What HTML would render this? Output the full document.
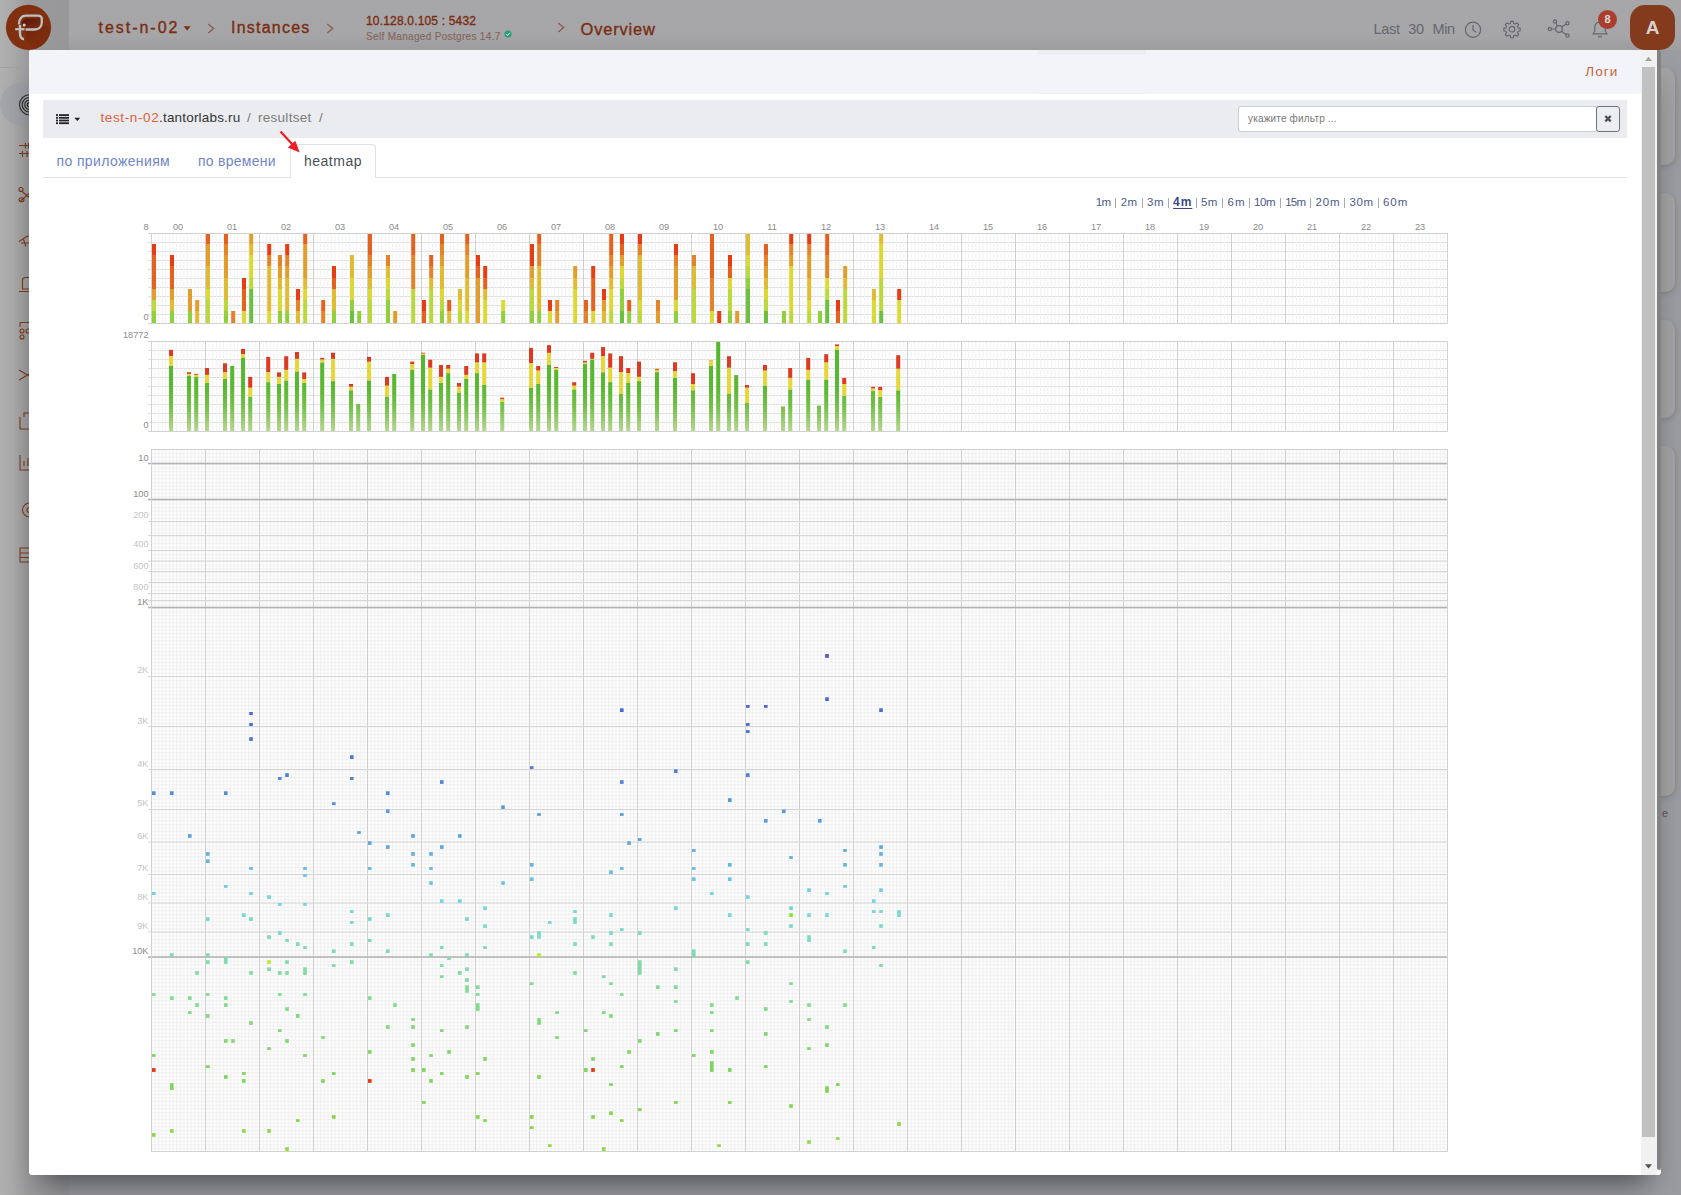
<!DOCTYPE html>
<html lang="ru"><head><meta charset="utf-8"><title>heatmap</title>
<style>
*{box-sizing:border-box;margin:0;padding:0}
html,body{width:1681px;height:1195px;overflow:hidden}
body{position:relative;background:#9b9ca1;font-family:"Liberation Sans",sans-serif;color:#333}
.abs{position:absolute}
#side{left:0;top:0;width:69px;height:1195px;background:linear-gradient(90deg,#b0b0b0 0,#ababab 10px,#9b9b9d 29px,#97979a 69px)}
#top{left:69px;top:0;width:1612px;height:50px;background:linear-gradient(#a7a7aa 0,#a6a6a9 70%,#9e9ea1 100%)}
#sideline{left:0;top:67px;width:69px;height:1px;background:#a0a0a4}
#pill{left:0;top:82px;width:72px;height:44px;border-radius:22px;background:linear-gradient(90deg,#a6a7ab 0,#9a9ba0 40%,#8c8d92 100%)}
.card{left:1600px;width:75px;border-radius:10px;background:#a3a3a3;box-shadow:1px 2px 5px rgba(0,0,0,.13)}
#logo{left:7px;top:5px;width:45px;height:45px;border-radius:50%;background:#84300f}
.bc{color:#7a2c10;white-space:nowrap;-webkit-text-stroke:.35px #7a2c10}
#t4{-webkit-text-stroke:.2px #86675d}
#avatar{left:1630px;top:5px;width:45px;height:45px;border-radius:15px;background:#843a1c;color:#d9cfcc;font-weight:bold;font-size:19px;text-align:center;line-height:45px;z-index:5}
#modal{left:29px;top:50px;width:1631.700px;height:1125px;background:#fff;border-radius:3px;box-shadow:0 20px 28px -12px rgba(0,0,0,.5)}
#mhead{left:0;top:0;width:1612px;height:44px;background:#f3f4f9;border-radius:3px 0 0 0}
#scroll{left:1612px;top:0;width:16px;height:1125px;background:#f1f1f1}
#thumb{left:1613px;top:17px;width:13px;height:1070px;background:#c1c1c1}
#sedge{left:1628px;top:0;width:3.700px;height:1120px;background:#828282;border-radius:0 3px 3px 3px}
#tool{left:14px;top:50px;width:1584px;height:37.500px;background:#ebecf0}
#tabs{left:14px;top:127px;width:1584px;height:1px;background:#dee2e6}
#tabact{left:261px;top:94px;width:86px;height:34px;border:1px solid #dee2e6;border-bottom:1px solid #fff;border-radius:4px 4px 0 0;background:#fff}
.tab{top:102.5px;font-size:14px;color:#6f86c9;white-space:nowrap}
#filter{left:1208.500px;top:56.400px;width:359px;height:25.400px;border:1px solid #c9ced4;border-radius:3px 0 0 3px;background:#fff;font-size:10px;color:#777;line-height:23px;padding-left:10px}
#fx{left:1567px;top:56.400px;width:24px;height:25.400px;border:1px solid #6c757d;border-radius:3px;background:#eceef1;text-align:center}
svg.charts{position:absolute;left:0;top:135px}
.crumb{top:59px;font-size:13.5px;line-height:18px;white-space:nowrap}
.iv{top:145px;font-size:11.5px;line-height:14px;color:#4b5a8c;white-space:nowrap}
.ivb{font-weight:bold;color:#3b4a86;font-size:12px;text-decoration:underline;text-decoration-thickness:1.300px;text-underline-offset:1.500px}
.ivs{top:147.500px;width:1px;height:10px;background:#aaa}
#filter{padding-left:9.500px}
#t1{letter-spacing:1.969px}
#t2{letter-spacing:1.225px}
#t3{letter-spacing:0.180px}
#t4{letter-spacing:0.324px}
#t5{letter-spacing:0.803px}
#t6{letter-spacing:-0.327px}
#t7{letter-spacing:1.088px}
#t8{letter-spacing:0.172px}
#c1{letter-spacing:0.621px}
#c2{letter-spacing:0.188px}
#c3{letter-spacing:0.278px}
#tb1{letter-spacing:0.379px}
#tb2{letter-spacing:0.252px}
#tb3{letter-spacing:0.501px}
#iv0{letter-spacing:-0.778px}
#iv1{letter-spacing:0.516px}
#iv2{letter-spacing:0.516px}
#iv3{letter-spacing:0.954px}
#iv4{letter-spacing:0.516px}
#iv5{letter-spacing:1.222px}
#iv6{letter-spacing:-0.341px}
#iv7{letter-spacing:-0.787px}
#iv8{letter-spacing:0.812px}
#iv9{letter-spacing:0.713px}
#iv10{letter-spacing:1.007px}

</style></head><body>
<div id="side" class="abs"></div>
<div id="top" class="abs"></div>
<div id="sideline" class="abs"></div>
<div id="pill" class="abs"></div>
<div class="abs card" style="top:68px;height:97px"></div>
<div class="abs card" style="top:193px;height:99px"></div>
<div class="abs card" style="top:320px;height:98px"></div>
<div class="abs card" style="top:446px;height:350px"></div>

<svg class="abs" style="left:14px;top:90px" width="40" height="480" viewBox="14 90 40 480">
 <g fill="none" stroke="#2a2a2a" stroke-width="1.100"><circle cx="29.500" cy="104.800" r="10"/><circle cx="29.500" cy="104.800" r="7.300"/><circle cx="29.500" cy="104.800" r="4.700"/><circle cx="29.500" cy="104.800" r="2.200"/></g>
 <g fill="none" stroke="#7a3a1c" stroke-width="1.100">
  <path d="M19 145.500H38M19 153.500H38M25.500 143V148.500M28.500 143V148.500M22.500 151V157M27 151V157"/>
  <path d="M21.500 191L36 203M20.500 201L36 187.500"/><circle cx="21" cy="189.500" r="2"/><ellipse cx="21.500" cy="199.800" rx="2.500" ry="2"/>
  <path d="M19 241.500L27.500 236L36 238M23.500 239.500L26 246.500M21 243H29"/>
  <path d="M19 291.500H38M22.500 289V280.500C22.500 278.500 23.500 277.500 25.500 277.500H32C34 277.500 35 278.500 35 280.500V289Z"/>
  <path d="M20 322.500H32M20 322.500V327"/><circle cx="22" cy="331" r="2"/><circle cx="22" cy="337" r="2"/><circle cx="28" cy="331" r="2"/>
  <path d="M19 370L36 380M19 380L36 370"/>
  <path d="M20 417V429H32M24 417V413H36"/>
  <path d="M20 455V470H38M24 466V461M28 466V458"/>
  <circle cx="29.500" cy="510" r="7"/><circle cx="29.500" cy="510" r="2.500"/>
  <path d="M20 548H38V562H20ZM20 553H38M20 557.500H38"/>
 </g>
</svg>


<svg class="abs" style="left:5px;top:4px" width="48" height="48" viewBox="0 0 48 48">
 <defs><linearGradient id="lg1" x1="0" y1="0" x2="1" y2="1"><stop offset="0" stop-color="#56140a"/><stop offset="1" stop-color="#7c2c0e"/></linearGradient>
 <linearGradient id="lg2" x1="0" y1="0" x2="1" y2="1"><stop offset="0" stop-color="#6e2208"/><stop offset="1" stop-color="#80300e"/></linearGradient></defs>
 <circle cx="23.500" cy="23.400" r="22.600" fill="#80300e"/>
 <path d="M20.600 26 L20.600 36 L30 45 C38 42 44 35 45.500 27 L36 16 Z" fill="url(#lg2)" opacity=".7"/>
 <path d="M17.300 21 C17 16.500 19.500 14.600 23 14.600 L34 14.400 C35.200 14.400 35.400 15.500 35.300 17 L35 19.500 C34.500 22.500 32 24 28.500 24 L20.600 24 L20.600 22 C20.600 20 18.500 19.500 17.300 21 Z" fill="url(#lg1)"/>
 <path d="M13.900 20.500 C13.900 14 17 11.700 21 11.700 L33 11.700 C35.800 11.700 36.800 12.900 36.800 15.200 L36.800 18.500 C36.800 23.300 33.200 25.500 29 25.500 L20.600 25.500" fill="none" stroke="#bcc0c4" stroke-width="2.300"/>
 <path d="M15 21 L15 29.500 C15 33 16.800 34.900 19 35.200" fill="none" stroke="#bcc0c4" stroke-width="2.500"/>
 <path d="M10.200 25.200 L19.500 25.200" fill="none" stroke="#bcc0c4" stroke-width="2.200"/>
 <circle cx="19.200" cy="20.900" r="1.500" fill="#c8cbce"/>
</svg>
<div id="t1" class="abs bc" style="left:98.5px;top:18px;font-size:16px;line-height:20px">test-n-02</div>
<svg class="abs" style="left:183px;top:25px" width="9" height="7" viewBox="0 0 9 7"><path d="M0.6 1.2 L7.6 1.2 L4.1 5.6 Z" fill="#7b3014"/></svg>
<svg class="abs" style="left:206px;top:22px" width="10" height="13" viewBox="0 0 10 13"><path d="M2.3 2 L7.6 6.5 L2.3 11" fill="none" stroke="#8c5e50" stroke-width="1.4"/></svg>
<div id="t2" class="abs bc" style="left:231px;top:18px;font-size:16px;line-height:20px">Instances</div>
<svg class="abs" style="left:325px;top:22px" width="10" height="13" viewBox="0 0 10 13"><path d="M2.3 2 L7.6 6.5 L2.3 11" fill="none" stroke="#8c5e50" stroke-width="1.4"/></svg>
<div id="t3" class="abs bc" style="left:366px;top:14px;font-size:12px;line-height:14px">10.128.0.105 : 5432</div>
<div id="t4" class="abs bc" style="left:366px;top:31px;font-size:10px;line-height:12px;color:#86675d">Self Managed Postgres 14.7</div>
<svg class="abs" style="left:504px;top:29.5px" width="8" height="8" viewBox="0 0 8 8"><circle cx="4" cy="4" r="3.6" fill="#2f9a78"/><path d="M2.2 4.1 L3.5 5.4 L5.9 2.8" fill="none" stroke="#cfe" stroke-width="1"/></svg>
<svg class="abs" style="left:556px;top:21px" width="10" height="13" viewBox="0 0 10 13"><path d="M2.3 2 L7.6 6.5 L2.3 11" fill="none" stroke="#8c5e50" stroke-width="1.4"/></svg>
<div id="t5" class="abs bc" style="left:580.5px;top:19px;font-size:16.5px;line-height:20px">Overview</div>
<div id="t6" class="abs" style="left:1373.5px;top:20px;font-size:14.5px;line-height:18px;color:#66676d;white-space:nowrap;word-spacing:5px">Last 30 Min</div>
<svg class="abs" style="left:1463px;top:20px" width="20" height="20" viewBox="0 0 20 20"><circle cx="10" cy="9.7" r="7.6" fill="none" stroke="#66676d" stroke-width="1.2"/><path d="M10 5 L10 10 L13 12.2" fill="none" stroke="#66676d" stroke-width="1.2"/></svg>
<svg class="abs" style="left:1502px;top:19px" width="20" height="20" viewBox="0 0 20 20"><path d="M8.6 1.6h2.8l.5 2.3 1.7.7 2-1.3 2 2-1.3 2 .7 1.7 2.3.5v2.8l-2.3.5-.7 1.7 1.3 2-2 2-2-1.3-1.7.7-.5 2.3H8.600l-.5-2.3-1.700-.7-2 1.3-2-2 1.300-2-.7-1.700-2.300-.5V9.500l2.300-.5.700-1.700-1.300-2 2-2 2 1.300 1.700-.7z" transform="translate(1.2 1) scale(.88)" fill="none" stroke="#66676d" stroke-width="1.3" stroke-linejoin="round"/><circle cx="10" cy="10.2" r="2.8" fill="none" stroke="#66676d" stroke-width="1.2"/></svg>
<svg class="abs" style="left:1546px;top:18px" width="26" height="22" viewBox="0 0 26 22"><g fill="none" stroke="#66676d" stroke-width="1.2"><circle cx="13" cy="11" r="3.3"/><circle cx="3.8" cy="11" r="1.6"/><circle cx="9" cy="3.400" r="1.600"/><circle cx="21.500" cy="5.200" r="1.600"/><circle cx="21.500" cy="17.500" r="1.600"/><path d="M5.400 11H9.700M9.800 4.800l1.700 3.200M15.600 9l4.600-3M15.400 13.300l4.800 3.300"/></g></svg>
<svg class="abs" style="left:1590px;top:20px" width="20" height="20" viewBox="0 0 20 20"><path d="M10 2.200c-3.200 0-5.200 2.300-5.200 5.400v3.600l-1.700 2.700h13.800l-1.700-2.700V7.600c0-3.100-2-5.400-5.200-5.400z" fill="none" stroke="#66676d" stroke-width="1.200"/><path d="M8.300 15.700a1.800 1.800 0 0 0 3.400 0" fill="none" stroke="#66676d" stroke-width="1.200"/></svg>
<div class="abs" style="left:1598px;top:10px;width:19px;height:19px;border-radius:50%;background:#a93e2e;color:#ddd;font-size:11px;font-weight:bold;line-height:19px;text-align:center">8</div>

<div class="abs" style="left:1662px;top:807px;font-size:11px;color:#6e5550">e</div>
<div id="avatar" class="abs">A</div>
<div id="modal" class="abs">
 <div id="mhead" class="abs"></div>
 <div id="scroll" class="abs"></div><div id="thumb" class="abs"></div><div id="sedge" class="abs"></div>
 <svg class="abs" style="left:1612px;top:0" width="16" height="17" viewBox="0 0 16 17"><path d="M4 10.900 L11 10.900 L7.500 6.700 Z" fill="#a3a3a3"/></svg>
 <svg class="abs" style="left:1612px;top:1108px" width="16" height="17" viewBox="0 0 16 17"><path d="M4 6.200 L11 6.200 L7.500 10.400 Z" fill="#505050"/></svg>
 <div class="abs" style="left:1009px;top:0;width:108px;height:5px;background:#eceef3"></div>
 <div class="abs" style="left:1009px;top:42.500px;width:108px;height:1.500px;background:#eceef3"></div>
 <div id="t7" class="abs" style="left:1556.300px;top:13.800px;font-size:13.5px;line-height:16px;color:#c4663c;white-space:nowrap">Логи</div>
 <div id="tool" class="abs"></div>
 <div id="filter" class="abs"><span id="t8">укажите фильтр ...</span></div>
 <div id="fx" class="abs"><svg width="22" height="23" viewBox="0 0 22 23"><path d="M8.300 9 L13.700 14.400 M13.700 9 L8.300 14.400" stroke="#495057" stroke-width="2.200"/></svg></div>
 <svg class="abs" style="left:26px;top:63px" width="28" height="12" viewBox="0 0 28 12"><g fill="#212529"><rect x="1" y="1.200" width="2" height="1.800"/><rect x="4" y="1.200" width="10" height="1.800"/><rect x="1" y="3.900" width="2" height="1.800"/><rect x="4" y="3.900" width="10" height="1.800"/><rect x="1" y="6.600" width="2" height="1.800"/><rect x="4" y="6.600" width="10" height="1.800"/><rect x="1" y="9.300" width="2" height="1.800"/><rect x="4" y="9.300" width="10" height="1.800"/><path d="M19.300 4.800 L25.300 4.800 L22.300 8 Z"/></g></svg>
 <div id="c1" class="abs crumb" style="left:71.500px;color:#e0603a">test-n-02</div>
 <div id="c2" class="abs crumb" style="left:130px;color:#343434">.tantorlabs.ru</div>
 <div class="abs crumb" style="left:218px;color:#7b7b7b">/</div>
 <div id="c3" class="abs crumb" style="left:229px;color:#7b7b7b">resultset</div>
 <div class="abs crumb" style="left:290px;color:#7b7b7b">/</div>
 <svg class="abs" style="left:248px;top:78px;z-index:3" width="26" height="28" viewBox="0 0 26 28"><path d="M3.500 3.500 L16 17" stroke="#ee1c24" stroke-width="2.200" fill="none"/><path d="M22.700 24.500 L10.800 19.500 L18.300 12.700 Z" fill="#ee1c24"/></svg>
 <div id="tabs" class="abs"></div>
 <div id="tabact" class="abs"></div>
 <div id="tb1" class="abs tab" style="left:27.500px">по приложениям</div>
 <div id="tb2" class="abs tab" style="left:169px">по времени</div>
 <div id="tb3" class="abs tab" style="left:275px;color:#495057">heatmap</div>
 <div id="iv0" class="abs iv" style="left:1066.8px">1m</div>
 <div id="iv1" class="abs iv" style="left:1091.7px">2m</div>
 <div id="iv2" class="abs iv" style="left:1118.1px">3m</div>
 <div id="iv3" class="abs iv ivb" style="left:1144.1px">4m</div>
 <div id="iv4" class="abs iv" style="left:1171.9px">5m</div>
 <div id="iv5" class="abs iv" style="left:1198.4px">6m</div>
 <div id="iv6" class="abs iv" style="left:1225.0px">10m</div>
 <div id="iv7" class="abs iv" style="left:1256.2px">15m</div>
 <div id="iv8" class="abs iv" style="left:1286.5px">20m</div>
 <div id="iv9" class="abs iv" style="left:1320.4px">30m</div>
 <div id="iv10" class="abs iv" style="left:1353.9px">60m</div>
 <div class="abs ivs" style="left:1086.0px"></div>
 <div class="abs ivs" style="left:1112.7px"></div>
 <div class="abs ivs" style="left:1139.1px"></div>
 <div class="abs ivs" style="left:1166.9px"></div>
 <div class="abs ivs" style="left:1192.9px"></div>
 <div class="abs ivs" style="left:1220.0px"></div>
 <div class="abs ivs" style="left:1251.2px"></div>
 <div class="abs ivs" style="left:1281.1px"></div>
 <div class="abs ivs" style="left:1315.0px"></div>
 <div class="abs ivs" style="left:1348.9px"></div>
<svg class="charts" width="1612" height="990" viewBox="29 185 1612 990">
<defs>
<pattern id="vg" x="151" y="0" width="3.6" height="10" patternUnits="userSpaceOnUse"><rect x="0" y="0" width="1" height="10" fill="#f1f1f1"/></pattern>
<pattern id="hg" x="151" y="449.5" width="3.6" height="3.6" patternUnits="userSpaceOnUse"><rect x="0" y="0" width="3.6" height="3.6" fill="#fdfdfd"/><rect x="0" y="0" width="1" height="3.6" fill="#f0f0f0"/><rect x="0" y="0" width="3.6" height="1" fill="#f0f0f0"/></pattern>
<linearGradient id="gg" gradientUnits="userSpaceOnUse" x1="0" y1="341.5" x2="0" y2="431.5"><stop offset="0" stop-color="#54b82c"/><stop offset="0.5" stop-color="#58b92e"/><stop offset="0.72" stop-color="#74c048"/><stop offset="1" stop-color="#b8d692"/></linearGradient>
</defs>
<rect x="151.5" y="233.5" width="1296" height="90" fill="#fff"/>
<rect x="148" y="242" width="1299.5" height="1" fill="#dedede"/>
<rect x="148" y="251" width="1299.5" height="1" fill="#dedede"/>
<rect x="148" y="260" width="1299.5" height="1" fill="#dedede"/>
<rect x="148" y="269" width="1299.5" height="1" fill="#dedede"/>
<rect x="148" y="278" width="1299.5" height="1" fill="#dedede"/>
<rect x="148" y="287" width="1299.5" height="1" fill="#dedede"/>
<rect x="148" y="296" width="1299.5" height="1" fill="#dedede"/>
<rect x="148" y="305" width="1299.5" height="1" fill="#dedede"/>
<rect x="148" y="314" width="1299.5" height="1" fill="#dedede"/>
<rect x="151.5" y="233.5" width="1296" height="90" fill="url(#vg)"/>
<rect x="205" y="233.5" width="1" height="90" fill="#cfcfcf"/>
<rect x="259" y="233.5" width="1" height="90" fill="#cfcfcf"/>
<rect x="313" y="233.5" width="1" height="90" fill="#cfcfcf"/>
<rect x="367" y="233.5" width="1" height="90" fill="#cfcfcf"/>
<rect x="421" y="233.5" width="1" height="90" fill="#cfcfcf"/>
<rect x="475" y="233.5" width="1" height="90" fill="#cfcfcf"/>
<rect x="529" y="233.5" width="1" height="90" fill="#cfcfcf"/>
<rect x="583" y="233.5" width="1" height="90" fill="#cfcfcf"/>
<rect x="637" y="233.5" width="1" height="90" fill="#cfcfcf"/>
<rect x="691" y="233.5" width="1" height="90" fill="#cfcfcf"/>
<rect x="745" y="233.5" width="1" height="90" fill="#cfcfcf"/>
<rect x="799" y="233.5" width="1" height="90" fill="#cfcfcf"/>
<rect x="853" y="233.5" width="1" height="90" fill="#cfcfcf"/>
<rect x="907" y="233.5" width="1" height="90" fill="#cfcfcf"/>
<rect x="961" y="233.5" width="1" height="90" fill="#cfcfcf"/>
<rect x="1015" y="233.5" width="1" height="90" fill="#cfcfcf"/>
<rect x="1069" y="233.5" width="1" height="90" fill="#cfcfcf"/>
<rect x="1123" y="233.5" width="1" height="90" fill="#cfcfcf"/>
<rect x="1177" y="233.5" width="1" height="90" fill="#cfcfcf"/>
<rect x="1231" y="233.5" width="1" height="90" fill="#cfcfcf"/>
<rect x="1285" y="233.5" width="1" height="90" fill="#cfcfcf"/>
<rect x="1339" y="233.5" width="1" height="90" fill="#cfcfcf"/>
<rect x="1393" y="233.5" width="1" height="90" fill="#cfcfcf"/>
<rect x="152" y="311" width="4" height="12" fill="#92cf3c"/>
<rect x="152" y="300" width="4" height="11" fill="#bbd93a"/>
<rect x="152" y="289" width="4" height="11" fill="#e29e2d"/>
<rect x="152" y="278" width="4" height="11" fill="#e5621e"/>
<rect x="152" y="266" width="4" height="12" fill="#e5621e"/>
<rect x="152" y="255" width="4" height="11" fill="#e5621e"/>
<rect x="152" y="244" width="4" height="11" fill="#e83c15"/>
<rect x="170" y="311" width="4" height="12" fill="#92cf3c"/>
<rect x="170" y="300" width="4" height="11" fill="#e0bc33"/>
<rect x="170" y="289" width="4" height="11" fill="#e29e2d"/>
<rect x="170" y="278" width="4" height="11" fill="#e5621e"/>
<rect x="170" y="266" width="4" height="12" fill="#e5621e"/>
<rect x="170" y="255" width="4" height="11" fill="#e83c15"/>
<rect x="188" y="311" width="4" height="12" fill="#92cf3c"/>
<rect x="188" y="300" width="4" height="11" fill="#e29e2d"/>
<rect x="188" y="289" width="4" height="11" fill="#e29e2d"/>
<rect x="195.2" y="311" width="4" height="12" fill="#e0bc33"/>
<rect x="195.2" y="300" width="4" height="11" fill="#e29e2d"/>
<rect x="206" y="311" width="4" height="12" fill="#bbd93a"/>
<rect x="206" y="300" width="4" height="11" fill="#bbd93a"/>
<rect x="206" y="289" width="4" height="11" fill="#dcd937"/>
<rect x="206" y="278" width="4" height="11" fill="#e0bc33"/>
<rect x="206" y="266" width="4" height="12" fill="#e0bc33"/>
<rect x="206" y="255" width="4" height="11" fill="#e29e2d"/>
<rect x="206" y="244" width="4" height="11" fill="#e29e2d"/>
<rect x="206" y="233" width="4" height="11" fill="#e5621e"/>
<rect x="224" y="311" width="4" height="12" fill="#92cf3c"/>
<rect x="224" y="300" width="4" height="11" fill="#bbd93a"/>
<rect x="224" y="289" width="4" height="11" fill="#e0bc33"/>
<rect x="224" y="278" width="4" height="11" fill="#e0bc33"/>
<rect x="224" y="266" width="4" height="12" fill="#e29e2d"/>
<rect x="224" y="255" width="4" height="11" fill="#e29e2d"/>
<rect x="224" y="244" width="4" height="11" fill="#e4832a"/>
<rect x="224" y="233" width="4" height="11" fill="#e5621e"/>
<rect x="231.2" y="311" width="4" height="12" fill="#e4832a"/>
<rect x="242" y="311" width="4" height="12" fill="#dcd937"/>
<rect x="242" y="300" width="4" height="11" fill="#e5621e"/>
<rect x="242" y="289" width="4" height="11" fill="#e5621e"/>
<rect x="242" y="278" width="4" height="11" fill="#e83c15"/>
<rect x="249.2" y="311" width="4" height="12" fill="#6cc040"/>
<rect x="249.2" y="300" width="4" height="11" fill="#6cc040"/>
<rect x="249.2" y="289" width="4" height="11" fill="#6cc040"/>
<rect x="249.2" y="278" width="4" height="11" fill="#bbd93a"/>
<rect x="249.2" y="266" width="4" height="12" fill="#dcd937"/>
<rect x="249.2" y="255" width="4" height="11" fill="#dcd937"/>
<rect x="249.2" y="244" width="4" height="11" fill="#e0bc33"/>
<rect x="249.2" y="233" width="4" height="11" fill="#e29e2d"/>
<rect x="267.2" y="311" width="4" height="12" fill="#dcd937"/>
<rect x="267.2" y="300" width="4" height="11" fill="#e0bc33"/>
<rect x="267.2" y="289" width="4" height="11" fill="#e0bc33"/>
<rect x="267.2" y="278" width="4" height="11" fill="#e0bc33"/>
<rect x="267.2" y="266" width="4" height="12" fill="#e0bc33"/>
<rect x="267.2" y="255" width="4" height="11" fill="#e4832a"/>
<rect x="267.2" y="244" width="4" height="11" fill="#e83c15"/>
<rect x="278" y="311" width="4" height="12" fill="#92cf3c"/>
<rect x="278" y="300" width="4" height="11" fill="#dcd937"/>
<rect x="278" y="289" width="4" height="11" fill="#dcd937"/>
<rect x="278" y="278" width="4" height="11" fill="#e0bc33"/>
<rect x="278" y="266" width="4" height="12" fill="#e29e2d"/>
<rect x="278" y="255" width="4" height="11" fill="#e4832a"/>
<rect x="285.2" y="311" width="4" height="12" fill="#92cf3c"/>
<rect x="285.2" y="300" width="4" height="11" fill="#e0bc33"/>
<rect x="285.2" y="289" width="4" height="11" fill="#e0bc33"/>
<rect x="285.2" y="278" width="4" height="11" fill="#e0bc33"/>
<rect x="285.2" y="266" width="4" height="12" fill="#e29e2d"/>
<rect x="285.2" y="255" width="4" height="11" fill="#e4832a"/>
<rect x="285.2" y="244" width="4" height="11" fill="#e83c15"/>
<rect x="296" y="311" width="4" height="12" fill="#e0bc33"/>
<rect x="296" y="300" width="4" height="11" fill="#e4832a"/>
<rect x="296" y="289" width="4" height="11" fill="#e83c15"/>
<rect x="303.2" y="311" width="4" height="12" fill="#bbd93a"/>
<rect x="303.2" y="300" width="4" height="11" fill="#bbd93a"/>
<rect x="303.2" y="289" width="4" height="11" fill="#dcd937"/>
<rect x="303.2" y="278" width="4" height="11" fill="#e0bc33"/>
<rect x="303.2" y="266" width="4" height="12" fill="#e29e2d"/>
<rect x="303.2" y="255" width="4" height="11" fill="#e29e2d"/>
<rect x="303.2" y="244" width="4" height="11" fill="#e29e2d"/>
<rect x="303.2" y="233" width="4" height="11" fill="#e5621e"/>
<rect x="321.2" y="311" width="4" height="12" fill="#e4832a"/>
<rect x="321.2" y="300" width="4" height="11" fill="#e5621e"/>
<rect x="332" y="311" width="4" height="12" fill="#92cf3c"/>
<rect x="332" y="300" width="4" height="11" fill="#e0bc33"/>
<rect x="332" y="289" width="4" height="11" fill="#e0bc33"/>
<rect x="332" y="278" width="4" height="11" fill="#e5621e"/>
<rect x="332" y="266" width="4" height="12" fill="#e83c15"/>
<rect x="350" y="311" width="4" height="12" fill="#6cc040"/>
<rect x="350" y="300" width="4" height="11" fill="#92cf3c"/>
<rect x="350" y="289" width="4" height="11" fill="#dcd937"/>
<rect x="350" y="278" width="4" height="11" fill="#dcd937"/>
<rect x="350" y="266" width="4" height="12" fill="#e0bc33"/>
<rect x="350" y="255" width="4" height="11" fill="#e0bc33"/>
<rect x="357.2" y="311" width="4" height="12" fill="#92cf3c"/>
<rect x="368" y="311" width="4" height="12" fill="#bbd93a"/>
<rect x="368" y="300" width="4" height="11" fill="#bbd93a"/>
<rect x="368" y="289" width="4" height="11" fill="#dcd937"/>
<rect x="368" y="278" width="4" height="11" fill="#e0bc33"/>
<rect x="368" y="266" width="4" height="12" fill="#e29e2d"/>
<rect x="368" y="255" width="4" height="11" fill="#e4832a"/>
<rect x="368" y="244" width="4" height="11" fill="#e5621e"/>
<rect x="368" y="233" width="4" height="11" fill="#e5621e"/>
<rect x="386" y="311" width="4" height="12" fill="#92cf3c"/>
<rect x="386" y="300" width="4" height="11" fill="#92cf3c"/>
<rect x="386" y="289" width="4" height="11" fill="#bbd93a"/>
<rect x="386" y="278" width="4" height="11" fill="#dcd937"/>
<rect x="386" y="266" width="4" height="12" fill="#e0bc33"/>
<rect x="386" y="255" width="4" height="11" fill="#e4832a"/>
<rect x="393.2" y="311" width="4" height="12" fill="#e29e2d"/>
<rect x="411.2" y="311" width="4" height="12" fill="#bbd93a"/>
<rect x="411.2" y="300" width="4" height="11" fill="#bbd93a"/>
<rect x="411.2" y="289" width="4" height="11" fill="#bbd93a"/>
<rect x="411.2" y="278" width="4" height="11" fill="#e4832a"/>
<rect x="411.2" y="266" width="4" height="12" fill="#e4832a"/>
<rect x="411.2" y="255" width="4" height="11" fill="#e4832a"/>
<rect x="411.2" y="244" width="4" height="11" fill="#e5621e"/>
<rect x="411.2" y="233" width="4" height="11" fill="#e5621e"/>
<rect x="422" y="311" width="4" height="12" fill="#e5621e"/>
<rect x="422" y="300" width="4" height="11" fill="#e83c15"/>
<rect x="429.2" y="311" width="4" height="12" fill="#bbd93a"/>
<rect x="429.2" y="300" width="4" height="11" fill="#bbd93a"/>
<rect x="429.2" y="289" width="4" height="11" fill="#bbd93a"/>
<rect x="429.2" y="278" width="4" height="11" fill="#e0bc33"/>
<rect x="429.2" y="266" width="4" height="12" fill="#e4832a"/>
<rect x="429.2" y="255" width="4" height="11" fill="#e5621e"/>
<rect x="440" y="311" width="4" height="12" fill="#92cf3c"/>
<rect x="440" y="300" width="4" height="11" fill="#bbd93a"/>
<rect x="440" y="289" width="4" height="11" fill="#dcd937"/>
<rect x="440" y="278" width="4" height="11" fill="#e0bc33"/>
<rect x="440" y="266" width="4" height="12" fill="#e0bc33"/>
<rect x="440" y="255" width="4" height="11" fill="#e29e2d"/>
<rect x="440" y="244" width="4" height="11" fill="#e4832a"/>
<rect x="440" y="233" width="4" height="11" fill="#e5621e"/>
<rect x="447.2" y="311" width="4" height="12" fill="#e0bc33"/>
<rect x="447.2" y="300" width="4" height="11" fill="#e5621e"/>
<rect x="458" y="311" width="4" height="12" fill="#bbd93a"/>
<rect x="458" y="300" width="4" height="11" fill="#dcd937"/>
<rect x="458" y="289" width="4" height="11" fill="#e0bc33"/>
<rect x="465.2" y="311" width="4" height="12" fill="#dcd937"/>
<rect x="465.2" y="300" width="4" height="11" fill="#e0bc33"/>
<rect x="465.2" y="289" width="4" height="11" fill="#e0bc33"/>
<rect x="465.2" y="278" width="4" height="11" fill="#e0bc33"/>
<rect x="465.2" y="266" width="4" height="12" fill="#e29e2d"/>
<rect x="465.2" y="255" width="4" height="11" fill="#e29e2d"/>
<rect x="465.2" y="244" width="4" height="11" fill="#e4832a"/>
<rect x="465.2" y="233" width="4" height="11" fill="#e5621e"/>
<rect x="476" y="311" width="4" height="12" fill="#e29e2d"/>
<rect x="476" y="300" width="4" height="11" fill="#e29e2d"/>
<rect x="476" y="289" width="4" height="11" fill="#e29e2d"/>
<rect x="476" y="278" width="4" height="11" fill="#e29e2d"/>
<rect x="476" y="266" width="4" height="12" fill="#e5621e"/>
<rect x="476" y="255" width="4" height="11" fill="#e83c15"/>
<rect x="483.2" y="311" width="4" height="12" fill="#dcd937"/>
<rect x="483.2" y="300" width="4" height="11" fill="#dcd937"/>
<rect x="483.2" y="289" width="4" height="11" fill="#e0bc33"/>
<rect x="483.2" y="278" width="4" height="11" fill="#e5621e"/>
<rect x="483.2" y="266" width="4" height="12" fill="#e83c15"/>
<rect x="501.2" y="311" width="4" height="12" fill="#92cf3c"/>
<rect x="501.2" y="300" width="4" height="11" fill="#dcd937"/>
<rect x="530" y="311" width="4" height="12" fill="#92cf3c"/>
<rect x="530" y="300" width="4" height="11" fill="#bbd93a"/>
<rect x="530" y="289" width="4" height="11" fill="#bbd93a"/>
<rect x="530" y="278" width="4" height="11" fill="#e0bc33"/>
<rect x="530" y="266" width="4" height="12" fill="#e29e2d"/>
<rect x="530" y="255" width="4" height="11" fill="#e83c15"/>
<rect x="530" y="244" width="4" height="11" fill="#e83c15"/>
<rect x="537.2" y="311" width="4" height="12" fill="#92cf3c"/>
<rect x="537.2" y="300" width="4" height="11" fill="#e0bc33"/>
<rect x="537.2" y="289" width="4" height="11" fill="#e0bc33"/>
<rect x="537.2" y="278" width="4" height="11" fill="#e0bc33"/>
<rect x="537.2" y="266" width="4" height="12" fill="#e0bc33"/>
<rect x="537.2" y="255" width="4" height="11" fill="#e4832a"/>
<rect x="537.2" y="244" width="4" height="11" fill="#e4832a"/>
<rect x="537.2" y="233" width="4" height="11" fill="#e5621e"/>
<rect x="548" y="311" width="4" height="12" fill="#dcd937"/>
<rect x="548" y="300" width="4" height="11" fill="#e83c15"/>
<rect x="555.2" y="311" width="4" height="12" fill="#e29e2d"/>
<rect x="555.2" y="300" width="4" height="11" fill="#e4832a"/>
<rect x="573.2" y="311" width="4" height="12" fill="#dcd937"/>
<rect x="573.2" y="300" width="4" height="11" fill="#dcd937"/>
<rect x="573.2" y="289" width="4" height="11" fill="#dcd937"/>
<rect x="573.2" y="278" width="4" height="11" fill="#e0bc33"/>
<rect x="573.2" y="266" width="4" height="12" fill="#e29e2d"/>
<rect x="584" y="311" width="4" height="12" fill="#e4832a"/>
<rect x="584" y="300" width="4" height="11" fill="#e5621e"/>
<rect x="591.2" y="311" width="4" height="12" fill="#dcd937"/>
<rect x="591.2" y="300" width="4" height="11" fill="#e5621e"/>
<rect x="591.2" y="289" width="4" height="11" fill="#e5621e"/>
<rect x="591.2" y="278" width="4" height="11" fill="#e5621e"/>
<rect x="591.2" y="266" width="4" height="12" fill="#e83c15"/>
<rect x="602" y="311" width="4" height="12" fill="#e0bc33"/>
<rect x="602" y="300" width="4" height="11" fill="#e29e2d"/>
<rect x="602" y="289" width="4" height="11" fill="#e83c15"/>
<rect x="609.2" y="311" width="4" height="12" fill="#bbd93a"/>
<rect x="609.2" y="300" width="4" height="11" fill="#dcd937"/>
<rect x="609.2" y="289" width="4" height="11" fill="#dcd937"/>
<rect x="609.2" y="278" width="4" height="11" fill="#e0bc33"/>
<rect x="609.2" y="266" width="4" height="12" fill="#e29e2d"/>
<rect x="609.2" y="255" width="4" height="11" fill="#e4832a"/>
<rect x="609.2" y="244" width="4" height="11" fill="#e5621e"/>
<rect x="609.2" y="233" width="4" height="11" fill="#e5621e"/>
<rect x="620" y="311" width="4" height="12" fill="#6cc040"/>
<rect x="620" y="300" width="4" height="11" fill="#92cf3c"/>
<rect x="620" y="289" width="4" height="11" fill="#92cf3c"/>
<rect x="620" y="278" width="4" height="11" fill="#bbd93a"/>
<rect x="620" y="266" width="4" height="12" fill="#dcd937"/>
<rect x="620" y="255" width="4" height="11" fill="#e29e2d"/>
<rect x="620" y="244" width="4" height="11" fill="#e5621e"/>
<rect x="620" y="233" width="4" height="11" fill="#e83c15"/>
<rect x="627.2" y="311" width="4" height="12" fill="#92cf3c"/>
<rect x="627.2" y="300" width="4" height="11" fill="#e5621e"/>
<rect x="638" y="311" width="4" height="12" fill="#bbd93a"/>
<rect x="638" y="300" width="4" height="11" fill="#dcd937"/>
<rect x="638" y="289" width="4" height="11" fill="#e0bc33"/>
<rect x="638" y="278" width="4" height="11" fill="#e0bc33"/>
<rect x="638" y="266" width="4" height="12" fill="#e0bc33"/>
<rect x="638" y="255" width="4" height="11" fill="#e0bc33"/>
<rect x="638" y="244" width="4" height="11" fill="#e4832a"/>
<rect x="638" y="233" width="4" height="11" fill="#e83c15"/>
<rect x="656" y="311" width="4" height="12" fill="#e29e2d"/>
<rect x="656" y="300" width="4" height="11" fill="#e4832a"/>
<rect x="674" y="311" width="4" height="12" fill="#92cf3c"/>
<rect x="674" y="300" width="4" height="11" fill="#dcd937"/>
<rect x="674" y="289" width="4" height="11" fill="#e29e2d"/>
<rect x="674" y="278" width="4" height="11" fill="#e29e2d"/>
<rect x="674" y="266" width="4" height="12" fill="#e29e2d"/>
<rect x="674" y="255" width="4" height="11" fill="#e4832a"/>
<rect x="674" y="244" width="4" height="11" fill="#e83c15"/>
<rect x="692" y="311" width="4" height="12" fill="#bbd93a"/>
<rect x="692" y="300" width="4" height="11" fill="#bbd93a"/>
<rect x="692" y="289" width="4" height="11" fill="#bbd93a"/>
<rect x="692" y="278" width="4" height="11" fill="#e0bc33"/>
<rect x="692" y="266" width="4" height="12" fill="#e0bc33"/>
<rect x="692" y="255" width="4" height="11" fill="#e4832a"/>
<rect x="710" y="311" width="4" height="12" fill="#dcd937"/>
<rect x="710" y="300" width="4" height="11" fill="#e4832a"/>
<rect x="710" y="289" width="4" height="11" fill="#e4832a"/>
<rect x="710" y="278" width="4" height="11" fill="#e4832a"/>
<rect x="710" y="266" width="4" height="12" fill="#e5621e"/>
<rect x="710" y="255" width="4" height="11" fill="#e5621e"/>
<rect x="710" y="244" width="4" height="11" fill="#e5621e"/>
<rect x="710" y="233" width="4" height="11" fill="#e5621e"/>
<rect x="717.2" y="311" width="4" height="12" fill="#e83c15"/>
<rect x="728" y="311" width="4" height="12" fill="#92cf3c"/>
<rect x="728" y="300" width="4" height="11" fill="#bbd93a"/>
<rect x="728" y="289" width="4" height="11" fill="#bbd93a"/>
<rect x="728" y="278" width="4" height="11" fill="#dcd937"/>
<rect x="728" y="266" width="4" height="12" fill="#e5621e"/>
<rect x="728" y="255" width="4" height="11" fill="#e83c15"/>
<rect x="735.2" y="311" width="4" height="12" fill="#e29e2d"/>
<rect x="746" y="311" width="4" height="12" fill="#6cc040"/>
<rect x="746" y="300" width="4" height="11" fill="#6cc040"/>
<rect x="746" y="289" width="4" height="11" fill="#6cc040"/>
<rect x="746" y="278" width="4" height="11" fill="#92cf3c"/>
<rect x="746" y="266" width="4" height="12" fill="#bbd93a"/>
<rect x="746" y="255" width="4" height="11" fill="#dcd937"/>
<rect x="746" y="244" width="4" height="11" fill="#e0bc33"/>
<rect x="746" y="233" width="4" height="11" fill="#e0bc33"/>
<rect x="764" y="311" width="4" height="12" fill="#6cc040"/>
<rect x="764" y="300" width="4" height="11" fill="#bbd93a"/>
<rect x="764" y="289" width="4" height="11" fill="#dcd937"/>
<rect x="764" y="278" width="4" height="11" fill="#e0bc33"/>
<rect x="764" y="266" width="4" height="12" fill="#e29e2d"/>
<rect x="764" y="255" width="4" height="11" fill="#e4832a"/>
<rect x="764" y="244" width="4" height="11" fill="#e5621e"/>
<rect x="782" y="311" width="4" height="12" fill="#92cf3c"/>
<rect x="789.2" y="311" width="4" height="12" fill="#bbd93a"/>
<rect x="789.2" y="300" width="4" height="11" fill="#dcd937"/>
<rect x="789.2" y="289" width="4" height="11" fill="#dcd937"/>
<rect x="789.2" y="278" width="4" height="11" fill="#dcd937"/>
<rect x="789.2" y="266" width="4" height="12" fill="#dcd937"/>
<rect x="789.2" y="255" width="4" height="11" fill="#e29e2d"/>
<rect x="789.2" y="244" width="4" height="11" fill="#e4832a"/>
<rect x="789.2" y="233" width="4" height="11" fill="#e83c15"/>
<rect x="807.2" y="311" width="4" height="12" fill="#bbd93a"/>
<rect x="807.2" y="300" width="4" height="11" fill="#dcd937"/>
<rect x="807.2" y="289" width="4" height="11" fill="#e0bc33"/>
<rect x="807.2" y="278" width="4" height="11" fill="#e0bc33"/>
<rect x="807.2" y="266" width="4" height="12" fill="#e29e2d"/>
<rect x="807.2" y="255" width="4" height="11" fill="#e29e2d"/>
<rect x="807.2" y="244" width="4" height="11" fill="#e4832a"/>
<rect x="807.2" y="233" width="4" height="11" fill="#e83c15"/>
<rect x="818" y="311" width="4" height="12" fill="#92cf3c"/>
<rect x="825.2" y="311" width="4" height="12" fill="#6cc040"/>
<rect x="825.2" y="300" width="4" height="11" fill="#6cc040"/>
<rect x="825.2" y="289" width="4" height="11" fill="#bbd93a"/>
<rect x="825.2" y="278" width="4" height="11" fill="#dcd937"/>
<rect x="825.2" y="266" width="4" height="12" fill="#e4832a"/>
<rect x="825.2" y="255" width="4" height="11" fill="#e4832a"/>
<rect x="825.2" y="244" width="4" height="11" fill="#e5621e"/>
<rect x="825.2" y="233" width="4" height="11" fill="#e5621e"/>
<rect x="836" y="311" width="4" height="12" fill="#e5621e"/>
<rect x="836" y="300" width="4" height="11" fill="#e83c15"/>
<rect x="843.2" y="311" width="4" height="12" fill="#bbd93a"/>
<rect x="843.2" y="300" width="4" height="11" fill="#bbd93a"/>
<rect x="843.2" y="289" width="4" height="11" fill="#bbd93a"/>
<rect x="843.2" y="278" width="4" height="11" fill="#e0bc33"/>
<rect x="843.2" y="266" width="4" height="12" fill="#e29e2d"/>
<rect x="872" y="311" width="4" height="12" fill="#dcd937"/>
<rect x="872" y="300" width="4" height="11" fill="#dcd937"/>
<rect x="872" y="289" width="4" height="11" fill="#e0bc33"/>
<rect x="879.2" y="311" width="4" height="12" fill="#6cc040"/>
<rect x="879.2" y="300" width="4" height="11" fill="#bbd93a"/>
<rect x="879.2" y="289" width="4" height="11" fill="#bbd93a"/>
<rect x="879.2" y="278" width="4" height="11" fill="#bbd93a"/>
<rect x="879.2" y="266" width="4" height="12" fill="#dcd937"/>
<rect x="879.2" y="255" width="4" height="11" fill="#dcd937"/>
<rect x="879.2" y="244" width="4" height="11" fill="#dcd937"/>
<rect x="879.2" y="233" width="4" height="11" fill="#e0bc33"/>
<rect x="897.2" y="311" width="4" height="12" fill="#dcd937"/>
<rect x="897.2" y="300" width="4" height="11" fill="#dcd937"/>
<rect x="897.2" y="289" width="4" height="11" fill="#e83c15"/>
<rect x="151.5" y="233.5" width="1296" height="90" fill="none" stroke="#d2d2d2" stroke-width="1"/>
<rect x="148" y="233" width="3.5" height="1" fill="#d2d2d2"/>
<rect x="148" y="323" width="3.5" height="1" fill="#d2d2d2"/>
<rect x="151.5" y="341.5" width="1296" height="90" fill="#fff"/>
<rect x="148" y="350" width="1299.5" height="1" fill="#dedede"/>
<rect x="148" y="359" width="1299.5" height="1" fill="#dedede"/>
<rect x="148" y="368" width="1299.5" height="1" fill="#dedede"/>
<rect x="148" y="377" width="1299.5" height="1" fill="#dedede"/>
<rect x="148" y="386" width="1299.5" height="1" fill="#dedede"/>
<rect x="148" y="395" width="1299.5" height="1" fill="#dedede"/>
<rect x="148" y="404" width="1299.5" height="1" fill="#dedede"/>
<rect x="148" y="413" width="1299.5" height="1" fill="#dedede"/>
<rect x="148" y="422" width="1299.5" height="1" fill="#dedede"/>
<rect x="151.5" y="341.5" width="1296" height="90" fill="url(#vg)"/>
<rect x="205" y="341.5" width="1" height="90" fill="#cfcfcf"/>
<rect x="259" y="341.5" width="1" height="90" fill="#cfcfcf"/>
<rect x="313" y="341.5" width="1" height="90" fill="#cfcfcf"/>
<rect x="367" y="341.5" width="1" height="90" fill="#cfcfcf"/>
<rect x="421" y="341.5" width="1" height="90" fill="#cfcfcf"/>
<rect x="475" y="341.5" width="1" height="90" fill="#cfcfcf"/>
<rect x="529" y="341.5" width="1" height="90" fill="#cfcfcf"/>
<rect x="583" y="341.5" width="1" height="90" fill="#cfcfcf"/>
<rect x="637" y="341.5" width="1" height="90" fill="#cfcfcf"/>
<rect x="691" y="341.5" width="1" height="90" fill="#cfcfcf"/>
<rect x="745" y="341.5" width="1" height="90" fill="#cfcfcf"/>
<rect x="799" y="341.5" width="1" height="90" fill="#cfcfcf"/>
<rect x="853" y="341.5" width="1" height="90" fill="#cfcfcf"/>
<rect x="907" y="341.5" width="1" height="90" fill="#cfcfcf"/>
<rect x="961" y="341.5" width="1" height="90" fill="#cfcfcf"/>
<rect x="1015" y="341.5" width="1" height="90" fill="#cfcfcf"/>
<rect x="1069" y="341.5" width="1" height="90" fill="#cfcfcf"/>
<rect x="1123" y="341.5" width="1" height="90" fill="#cfcfcf"/>
<rect x="1177" y="341.5" width="1" height="90" fill="#cfcfcf"/>
<rect x="1231" y="341.5" width="1" height="90" fill="#cfcfcf"/>
<rect x="1285" y="341.5" width="1" height="90" fill="#cfcfcf"/>
<rect x="1339" y="341.5" width="1" height="90" fill="#cfcfcf"/>
<rect x="1393" y="341.5" width="1" height="90" fill="#cfcfcf"/>
<rect x="169" y="349.9" width="4" height="6.3" fill="#dc3a22"/>
<rect x="169" y="356.2" width="4" height="9.8" fill="#e6d838"/>
<rect x="169" y="366" width="4" height="65.5" fill="url(#gg)"/>
<rect x="187" y="372.2" width="4" height="1.7" fill="#dc3a22"/>
<rect x="187" y="373.9" width="4" height="2" fill="#e6d838"/>
<rect x="187" y="375.9" width="4" height="55.6" fill="url(#gg)"/>
<rect x="194.2" y="373.9" width="4" height="1" fill="#dc3a22"/>
<rect x="194.2" y="374.9" width="4" height="2" fill="#e6d838"/>
<rect x="194.2" y="376.9" width="4" height="54.6" fill="url(#gg)"/>
<rect x="205" y="368" width="4" height="6.9" fill="#dc3a22"/>
<rect x="205" y="374.9" width="4" height="8.1" fill="#e6d838"/>
<rect x="205" y="383" width="4" height="48.5" fill="url(#gg)"/>
<rect x="223" y="363.3" width="4" height="9.1" fill="#dc3a22"/>
<rect x="223" y="372.4" width="4" height="6.6" fill="#e6d838"/>
<rect x="223" y="379" width="4" height="52.5" fill="url(#gg)"/>
<rect x="230.2" y="366" width="4" height="65.5" fill="url(#gg)"/>
<rect x="241" y="348.9" width="4" height="5.3" fill="#dc3a22"/>
<rect x="241" y="354.2" width="4" height="3.7" fill="#e6d838"/>
<rect x="241" y="357.9" width="4" height="73.6" fill="url(#gg)"/>
<rect x="248.2" y="376.9" width="4" height="10.9" fill="#dc3a22"/>
<rect x="248.2" y="387.8" width="4" height="8.9" fill="#e6d838"/>
<rect x="248.2" y="396.7" width="4" height="34.8" fill="url(#gg)"/>
<rect x="266.2" y="356.9" width="4" height="15.5" fill="#dc3a22"/>
<rect x="266.2" y="372.4" width="4" height="9.8" fill="#e6d838"/>
<rect x="266.2" y="382.2" width="4" height="49.3" fill="url(#gg)"/>
<rect x="277" y="372.4" width="4" height="4.5" fill="#dc3a22"/>
<rect x="277" y="376.9" width="4" height="7.1" fill="#e6d838"/>
<rect x="277" y="384" width="4" height="47.5" fill="url(#gg)"/>
<rect x="284.2" y="356.2" width="4" height="13.7" fill="#dc3a22"/>
<rect x="284.2" y="369.9" width="4" height="10.8" fill="#e6d838"/>
<rect x="284.2" y="380.7" width="4" height="50.8" fill="url(#gg)"/>
<rect x="295" y="352" width="4" height="6.9" fill="#dc3a22"/>
<rect x="295" y="358.9" width="4" height="12.8" fill="#e6d838"/>
<rect x="295" y="371.7" width="4" height="59.8" fill="url(#gg)"/>
<rect x="302.2" y="372.4" width="4" height="6.6" fill="#dc3a22"/>
<rect x="302.2" y="379" width="4" height="4" fill="#e6d838"/>
<rect x="302.2" y="383" width="4" height="48.5" fill="url(#gg)"/>
<rect x="320.2" y="357.9" width="4" height="1.8" fill="#dc3a22"/>
<rect x="320.2" y="359.7" width="4" height="2.9" fill="#e6d838"/>
<rect x="320.2" y="362.6" width="4" height="68.9" fill="url(#gg)"/>
<rect x="331" y="352.7" width="4" height="6.2" fill="#dc3a22"/>
<rect x="331" y="358.9" width="4" height="22.3" fill="#e6d838"/>
<rect x="331" y="381.2" width="4" height="50.3" fill="url(#gg)"/>
<rect x="349" y="384" width="4" height="2.8" fill="#dc3a22"/>
<rect x="349" y="386.8" width="4" height="3.6" fill="#e6d838"/>
<rect x="349" y="390.4" width="4" height="41.1" fill="url(#gg)"/>
<rect x="356.2" y="404" width="4" height="27.5" fill="url(#gg)"/>
<rect x="367" y="356.9" width="4" height="4.9" fill="#dc3a22"/>
<rect x="367" y="361.8" width="4" height="18.7" fill="#e6d838"/>
<rect x="367" y="380.5" width="4" height="51" fill="url(#gg)"/>
<rect x="385" y="376.9" width="4" height="8.9" fill="#dc3a22"/>
<rect x="385" y="385.8" width="4" height="10.9" fill="#e6d838"/>
<rect x="385" y="396.7" width="4" height="34.8" fill="url(#gg)"/>
<rect x="392.2" y="373.9" width="4" height="57.6" fill="url(#gg)"/>
<rect x="410.2" y="361.6" width="4" height="2.5" fill="#dc3a22"/>
<rect x="410.2" y="364.1" width="4" height="5.8" fill="#e6d838"/>
<rect x="410.2" y="369.9" width="4" height="61.6" fill="url(#gg)"/>
<rect x="421" y="352.7" width="4" height="1" fill="#dc3a22"/>
<rect x="421" y="353.7" width="4" height="1.3" fill="#e6d838"/>
<rect x="421" y="355" width="4" height="76.5" fill="url(#gg)"/>
<rect x="428.2" y="359.7" width="4" height="8.1" fill="#dc3a22"/>
<rect x="428.2" y="367.8" width="4" height="21.8" fill="#e6d838"/>
<rect x="428.2" y="389.6" width="4" height="41.9" fill="url(#gg)"/>
<rect x="439" y="365" width="4" height="11.9" fill="#dc3a22"/>
<rect x="439" y="376.9" width="4" height="6.1" fill="#e6d838"/>
<rect x="439" y="383" width="4" height="48.5" fill="url(#gg)"/>
<rect x="446.2" y="365" width="4" height="3.8" fill="#dc3a22"/>
<rect x="446.2" y="368.8" width="4" height="4.4" fill="#e6d838"/>
<rect x="446.2" y="373.2" width="4" height="58.3" fill="url(#gg)"/>
<rect x="457" y="383" width="4" height="3.8" fill="#dc3a22"/>
<rect x="457" y="386.8" width="4" height="6.1" fill="#e6d838"/>
<rect x="457" y="392.9" width="4" height="38.6" fill="url(#gg)"/>
<rect x="464.2" y="366" width="4" height="8.9" fill="#dc3a22"/>
<rect x="464.2" y="374.9" width="4" height="4.1" fill="#e6d838"/>
<rect x="464.2" y="379" width="4" height="52.5" fill="url(#gg)"/>
<rect x="475" y="353.4" width="4" height="9.2" fill="#dc3a22"/>
<rect x="475" y="362.6" width="4" height="10.6" fill="#e6d838"/>
<rect x="475" y="373.2" width="4" height="58.3" fill="url(#gg)"/>
<rect x="482.2" y="353.4" width="4" height="9.2" fill="#dc3a22"/>
<rect x="482.2" y="362.6" width="4" height="22.4" fill="#e6d838"/>
<rect x="482.2" y="385" width="4" height="46.5" fill="url(#gg)"/>
<rect x="500.2" y="397.7" width="4" height="1.7" fill="#dc3a22"/>
<rect x="500.2" y="399.4" width="4" height="2.6" fill="#e6d838"/>
<rect x="500.2" y="402" width="4" height="29.5" fill="url(#gg)"/>
<rect x="529" y="347.9" width="4" height="15.4" fill="#dc3a22"/>
<rect x="529" y="363.3" width="4" height="24.5" fill="#e6d838"/>
<rect x="529" y="387.8" width="4" height="43.7" fill="url(#gg)"/>
<rect x="536.2" y="366" width="4" height="4.7" fill="#dc3a22"/>
<rect x="536.2" y="370.7" width="4" height="13.3" fill="#e6d838"/>
<rect x="536.2" y="384" width="4" height="47.5" fill="url(#gg)"/>
<rect x="547" y="345.1" width="4" height="7.8" fill="#dc3a22"/>
<rect x="547" y="352.9" width="4" height="12.1" fill="#e6d838"/>
<rect x="547" y="365" width="4" height="66.5" fill="url(#gg)"/>
<rect x="554.2" y="367" width="4" height="1" fill="#dc3a22"/>
<rect x="554.2" y="368" width="4" height="1.9" fill="#e6d838"/>
<rect x="554.2" y="369.9" width="4" height="61.6" fill="url(#gg)"/>
<rect x="572.2" y="382.2" width="4" height="3.6" fill="#dc3a22"/>
<rect x="572.2" y="385.8" width="4" height="3.8" fill="#e6d838"/>
<rect x="572.2" y="389.6" width="4" height="41.9" fill="url(#gg)"/>
<rect x="583" y="360.8" width="4" height="1.8" fill="#dc3a22"/>
<rect x="583" y="362.6" width="4" height="1.5" fill="#e6d838"/>
<rect x="583" y="364.1" width="4" height="67.4" fill="url(#gg)"/>
<rect x="590.2" y="352.7" width="4" height="6.2" fill="#dc3a22"/>
<rect x="590.2" y="358.9" width="4" height="0.8" fill="#e6d838"/>
<rect x="590.2" y="359.7" width="4" height="71.8" fill="url(#gg)"/>
<rect x="601" y="347.1" width="4" height="8.9" fill="#dc3a22"/>
<rect x="601" y="356" width="4" height="16.4" fill="#e6d838"/>
<rect x="601" y="372.4" width="4" height="59.1" fill="url(#gg)"/>
<rect x="608.2" y="353.4" width="4" height="14.4" fill="#dc3a22"/>
<rect x="608.2" y="367.8" width="4" height="14.4" fill="#e6d838"/>
<rect x="608.2" y="382.2" width="4" height="49.3" fill="url(#gg)"/>
<rect x="619" y="356.2" width="4" height="16.2" fill="#dc3a22"/>
<rect x="619" y="372.4" width="4" height="21.5" fill="#e6d838"/>
<rect x="619" y="393.9" width="4" height="37.6" fill="url(#gg)"/>
<rect x="626.2" y="368" width="4" height="5.2" fill="#dc3a22"/>
<rect x="626.2" y="373.2" width="4" height="9.8" fill="#e6d838"/>
<rect x="626.2" y="383" width="4" height="48.5" fill="url(#gg)"/>
<rect x="637" y="361.6" width="4" height="15.3" fill="#dc3a22"/>
<rect x="637" y="376.9" width="4" height="4.3" fill="#e6d838"/>
<rect x="637" y="381.2" width="4" height="50.3" fill="url(#gg)"/>
<rect x="655" y="368.8" width="4" height="1.1" fill="#dc3a22"/>
<rect x="655" y="369.9" width="4" height="2.3" fill="#e6d838"/>
<rect x="655" y="372.2" width="4" height="59.3" fill="url(#gg)"/>
<rect x="673" y="362.3" width="4" height="9.1" fill="#dc3a22"/>
<rect x="673" y="371.4" width="4" height="6.5" fill="#e6d838"/>
<rect x="673" y="377.9" width="4" height="53.6" fill="url(#gg)"/>
<rect x="691" y="373.2" width="4" height="10.8" fill="#dc3a22"/>
<rect x="691" y="384" width="4" height="6.4" fill="#e6d838"/>
<rect x="691" y="390.4" width="4" height="41.1" fill="url(#gg)"/>
<rect x="709" y="360" width="4" height="0.5" fill="#dc3a22"/>
<rect x="709" y="360.5" width="4" height="5.5" fill="#e6d838"/>
<rect x="709" y="366" width="4" height="65.5" fill="url(#gg)"/>
<rect x="716.2" y="341.5" width="4" height="90" fill="url(#gg)"/>
<rect x="727" y="356.2" width="4" height="11.6" fill="#dc3a22"/>
<rect x="727" y="367.8" width="4" height="26.1" fill="#e6d838"/>
<rect x="727" y="393.9" width="4" height="37.6" fill="url(#gg)"/>
<rect x="734.2" y="375.1" width="4" height="56.4" fill="url(#gg)"/>
<rect x="745" y="385" width="4" height="2.8" fill="#dc3a22"/>
<rect x="745" y="387.8" width="4" height="15.2" fill="#e6d838"/>
<rect x="745" y="403" width="4" height="28.5" fill="url(#gg)"/>
<rect x="763" y="365" width="4" height="5.7" fill="#dc3a22"/>
<rect x="763" y="370.7" width="4" height="15.1" fill="#e6d838"/>
<rect x="763" y="385.8" width="4" height="45.7" fill="url(#gg)"/>
<rect x="781" y="406.3" width="4" height="0.3" fill="#e6d838"/>
<rect x="781" y="406.6" width="4" height="24.9" fill="url(#gg)"/>
<rect x="788.2" y="368" width="4" height="9.9" fill="#dc3a22"/>
<rect x="788.2" y="377.9" width="4" height="11.7" fill="#e6d838"/>
<rect x="788.2" y="389.6" width="4" height="41.9" fill="url(#gg)"/>
<rect x="806.2" y="357.9" width="4" height="12" fill="#dc3a22"/>
<rect x="806.2" y="369.9" width="4" height="9.8" fill="#e6d838"/>
<rect x="806.2" y="379.7" width="4" height="51.8" fill="url(#gg)"/>
<rect x="817" y="405.6" width="4" height="25.9" fill="url(#gg)"/>
<rect x="824.2" y="354.2" width="4" height="8.4" fill="#dc3a22"/>
<rect x="824.2" y="362.6" width="4" height="17.1" fill="#e6d838"/>
<rect x="824.2" y="379.7" width="4" height="51.8" fill="url(#gg)"/>
<rect x="835" y="344.4" width="4" height="1.7" fill="#dc3a22"/>
<rect x="835" y="346.1" width="4" height="3.8" fill="#e6d838"/>
<rect x="835" y="349.9" width="4" height="81.6" fill="url(#gg)"/>
<rect x="842.2" y="377.9" width="4" height="6.1" fill="#dc3a22"/>
<rect x="842.2" y="384" width="4" height="11.9" fill="#e6d838"/>
<rect x="842.2" y="395.9" width="4" height="35.6" fill="url(#gg)"/>
<rect x="871" y="386.8" width="4" height="1.8" fill="#dc3a22"/>
<rect x="871" y="388.6" width="4" height="2.5" fill="#e6d838"/>
<rect x="871" y="391.1" width="4" height="40.4" fill="url(#gg)"/>
<rect x="878.2" y="386.8" width="4" height="3.6" fill="#dc3a22"/>
<rect x="878.2" y="390.4" width="4" height="6.6" fill="#e6d838"/>
<rect x="878.2" y="397" width="4" height="34.5" fill="url(#gg)"/>
<rect x="896.2" y="355.2" width="4" height="13.6" fill="#dc3a22"/>
<rect x="896.2" y="368.8" width="4" height="21.6" fill="#e6d838"/>
<rect x="896.2" y="390.4" width="4" height="41.1" fill="url(#gg)"/>
<rect x="151.5" y="341.5" width="1296" height="90" fill="none" stroke="#d2d2d2" stroke-width="1"/>
<rect x="148" y="341" width="3.5" height="1" fill="#d2d2d2"/>
<rect x="148" y="431" width="3.5" height="1" fill="#d2d2d2"/>
<rect x="151.5" y="449.5" width="1296" height="702" fill="url(#hg)"/>
<rect x="205" y="449.5" width="1" height="702" fill="#d0d0d0"/>
<rect x="259" y="449.5" width="1" height="702" fill="#d0d0d0"/>
<rect x="313" y="449.5" width="1" height="702" fill="#d0d0d0"/>
<rect x="367" y="449.5" width="1" height="702" fill="#d0d0d0"/>
<rect x="421" y="449.5" width="1" height="702" fill="#d0d0d0"/>
<rect x="475" y="449.5" width="1" height="702" fill="#d0d0d0"/>
<rect x="529" y="449.5" width="1" height="702" fill="#d0d0d0"/>
<rect x="583" y="449.5" width="1" height="702" fill="#d0d0d0"/>
<rect x="637" y="449.5" width="1" height="702" fill="#d0d0d0"/>
<rect x="691" y="449.5" width="1" height="702" fill="#d0d0d0"/>
<rect x="745" y="449.5" width="1" height="702" fill="#d0d0d0"/>
<rect x="799" y="449.5" width="1" height="702" fill="#d0d0d0"/>
<rect x="853" y="449.5" width="1" height="702" fill="#d0d0d0"/>
<rect x="907" y="449.5" width="1" height="702" fill="#d0d0d0"/>
<rect x="961" y="449.5" width="1" height="702" fill="#d0d0d0"/>
<rect x="1015" y="449.5" width="1" height="702" fill="#d0d0d0"/>
<rect x="1069" y="449.5" width="1" height="702" fill="#d0d0d0"/>
<rect x="1123" y="449.5" width="1" height="702" fill="#d0d0d0"/>
<rect x="1177" y="449.5" width="1" height="702" fill="#d0d0d0"/>
<rect x="1231" y="449.5" width="1" height="702" fill="#d0d0d0"/>
<rect x="1285" y="449.5" width="1" height="702" fill="#d0d0d0"/>
<rect x="1339" y="449.5" width="1" height="702" fill="#d0d0d0"/>
<rect x="1393" y="449.5" width="1" height="702" fill="#d0d0d0"/>
<rect x="148" y="462.7" width="1299.5" height="1.6" fill="#b3b3b3"/>
<rect x="148" y="498.7" width="1299.5" height="1.6" fill="#b3b3b3"/>
<rect x="148" y="521" width="1299.5" height="1" fill="#d6d6d6"/>
<rect x="148" y="535" width="1299.5" height="1" fill="#d6d6d6"/>
<rect x="148" y="550" width="1299.5" height="1" fill="#d6d6d6"/>
<rect x="148" y="560.5" width="1299.5" height="1" fill="#d6d6d6"/>
<rect x="148" y="571" width="1299.5" height="1" fill="#d6d6d6"/>
<rect x="148" y="582" width="1299.5" height="1" fill="#d6d6d6"/>
<rect x="148" y="593" width="1299.5" height="1" fill="#d6d6d6"/>
<rect x="148" y="600" width="1299.5" height="1" fill="#d6d6d6"/>
<rect x="148" y="606.7" width="1299.5" height="1.6" fill="#b3b3b3"/>
<rect x="148" y="676" width="1299.5" height="1" fill="#d6d6d6"/>
<rect x="148" y="726" width="1299.5" height="1" fill="#d6d6d6"/>
<rect x="148" y="769" width="1299.5" height="1" fill="#d6d6d6"/>
<rect x="148" y="809" width="1299.5" height="1" fill="#d6d6d6"/>
<rect x="148" y="841.5" width="1299.5" height="1" fill="#d6d6d6"/>
<rect x="148" y="874" width="1299.5" height="1" fill="#d6d6d6"/>
<rect x="148" y="902.5" width="1299.5" height="1" fill="#d6d6d6"/>
<rect x="148" y="931.5" width="1299.5" height="1" fill="#d6d6d6"/>
<rect x="148" y="956.2" width="1299.5" height="1.6" fill="#b3b3b3"/>
<rect x="249.2" y="712" width="3.6" height="3" fill="#4b6ad7"/>
<rect x="249.2" y="723" width="3.6" height="3" fill="#4b6ed7"/>
<rect x="249.2" y="737.2" width="3.6" height="3.7" fill="#4c73d8"/>
<rect x="350" y="755.2" width="3.6" height="3.8" fill="#4e7bd9"/>
<rect x="285.2" y="773.2" width="3.6" height="3.8" fill="#4f83da"/>
<rect x="278" y="777" width="3.6" height="2.9" fill="#5085da"/>
<rect x="350" y="777" width="3.6" height="3" fill="#5085da"/>
<rect x="152" y="791.3" width="3.6" height="3.7" fill="#538edb"/>
<rect x="170" y="791.3" width="3.6" height="3.7" fill="#538edb"/>
<rect x="224" y="791.3" width="3.6" height="3.7" fill="#538edb"/>
<rect x="386" y="791.3" width="3.6" height="3.7" fill="#538edb"/>
<rect x="332" y="802.2" width="3.6" height="2.9" fill="#5696db"/>
<rect x="386" y="809.4" width="3.6" height="3.6" fill="#589cdc"/>
<rect x="620" y="708.3" width="3.6" height="3.7" fill="#4a69d6"/>
<rect x="530" y="766.2" width="3.6" height="2.8" fill="#4f80d9"/>
<rect x="674" y="769.3" width="3.6" height="3.7" fill="#4f81d9"/>
<rect x="440" y="780.2" width="3.6" height="3.7" fill="#5086da"/>
<rect x="620" y="780.2" width="3.6" height="3.7" fill="#5086da"/>
<rect x="501.2" y="805.3" width="3.6" height="3.7" fill="#5799dc"/>
<rect x="537.2" y="813.1" width="3.6" height="2.8" fill="#599ddc"/>
<rect x="620" y="813.1" width="3.6" height="2.8" fill="#599ddc"/>
<rect x="825.2" y="654.1" width="3.6" height="3.7" fill="#4456cd"/>
<rect x="825.2" y="697.3" width="3.6" height="3.7" fill="#4a65d5"/>
<rect x="746" y="705" width="3.6" height="2.8" fill="#4a68d6"/>
<rect x="764" y="705" width="3.6" height="2.8" fill="#4a68d6"/>
<rect x="879.2" y="708.3" width="3.6" height="3.7" fill="#4a69d6"/>
<rect x="746" y="723" width="3.6" height="2.9" fill="#4b6ed7"/>
<rect x="746" y="730.1" width="3.6" height="2.9" fill="#4c71d8"/>
<rect x="746" y="773.2" width="3.6" height="3.8" fill="#4f83da"/>
<rect x="728" y="798.2" width="3.6" height="3.7" fill="#5593db"/>
<rect x="782" y="809.5" width="3.6" height="3.6" fill="#589cdc"/>
<rect x="764" y="819" width="3.6" height="3.7" fill="#5a9fdc"/>
<rect x="818" y="819" width="3.6" height="3.7" fill="#5a9fdc"/>
<rect x="188" y="834.1" width="3.6" height="3.7" fill="#5ea4dc"/>
<rect x="357.2" y="831.1" width="3.6" height="2.8" fill="#5da3dc"/>
<rect x="411.2" y="834.1" width="3.6" height="3.7" fill="#5ea4dc"/>
<rect x="368" y="841.2" width="3.6" height="3.7" fill="#5fa7dc"/>
<rect x="386" y="845.2" width="3.6" height="3.7" fill="#60a8dc"/>
<rect x="206" y="852.1" width="3.6" height="3.7" fill="#62aedd"/>
<rect x="411.2" y="852.1" width="3.6" height="3.7" fill="#62aedd"/>
<rect x="206" y="859.4" width="3.6" height="3.6" fill="#65b4de"/>
<rect x="411.2" y="863" width="3.6" height="3.7" fill="#66b6df"/>
<rect x="249.2" y="867.1" width="3.6" height="2.8" fill="#67bae0"/>
<rect x="303.2" y="867.1" width="3.6" height="2.8" fill="#67bae0"/>
<rect x="368" y="867.1" width="3.6" height="2.8" fill="#67bae0"/>
<rect x="303.2" y="874.1" width="3.6" height="2.8" fill="#6ac0e0"/>
<rect x="224" y="885" width="3.6" height="2.8" fill="#6fcae1"/>
<rect x="152" y="892.1" width="3.6" height="2.9" fill="#73d1e2"/>
<rect x="249.2" y="892.1" width="3.6" height="2.9" fill="#73d1e2"/>
<rect x="267.2" y="895.2" width="3.6" height="3.7" fill="#74d4e2"/>
<rect x="278" y="903" width="3.6" height="2.9" fill="#76d6dc"/>
<rect x="303.2" y="903" width="3.6" height="2.9" fill="#76d6dc"/>
<rect x="350" y="910.1" width="3.6" height="2.9" fill="#77d7d6"/>
<rect x="242" y="913.2" width="3.6" height="3.8" fill="#78d8d3"/>
<rect x="386" y="913.2" width="3.6" height="3.8" fill="#78d8d3"/>
<rect x="206" y="917.2" width="3.6" height="3.7" fill="#78d8d0"/>
<rect x="249.2" y="917.2" width="3.6" height="3.7" fill="#78d8d0"/>
<rect x="368" y="917.2" width="3.6" height="3.7" fill="#78d8d0"/>
<rect x="350" y="921" width="3.6" height="2.9" fill="#79d9cd"/>
<rect x="278" y="931.1" width="3.6" height="3.8" fill="#7bdbc4"/>
<rect x="267.2" y="935.2" width="3.6" height="3.7" fill="#7bdbc0"/>
<rect x="285.2" y="939" width="3.6" height="2.9" fill="#7cdcbd"/>
<rect x="368" y="939" width="3.6" height="2.9" fill="#7cdcbd"/>
<rect x="296" y="942.2" width="3.6" height="3.7" fill="#7cdcba"/>
<rect x="350" y="942.2" width="3.6" height="3.7" fill="#7cdcba"/>
<rect x="303.2" y="946.1" width="3.6" height="2.9" fill="#7ddcb6"/>
<rect x="332" y="949.3" width="3.6" height="3.7" fill="#7ddcb2"/>
<rect x="386" y="949.3" width="3.6" height="3.7" fill="#7ddcb2"/>
<rect x="170" y="953.2" width="3.6" height="3.7" fill="#7edcae"/>
<rect x="206" y="953.2" width="3.6" height="3.7" fill="#7edcae"/>
<rect x="224" y="957.3" width="3.6" height="6.6" fill="#7fdcaa"/>
<rect x="206" y="960.2" width="3.6" height="3.7" fill="#7fdca7"/>
<rect x="267.2" y="960.2" width="3.6" height="3.7" fill="#b4ee22"/>
<rect x="285.2" y="960.2" width="3.6" height="3.7" fill="#7fdca7"/>
<rect x="350" y="960.2" width="3.6" height="3.7" fill="#7fdca7"/>
<rect x="332" y="964.1" width="3.6" height="2.9" fill="#80dca3"/>
<rect x="267.2" y="967.3" width="3.6" height="3.7" fill="#80dca1"/>
<rect x="303.2" y="967.3" width="3.6" height="7.7" fill="#80dca1"/>
<rect x="195.2" y="971.1" width="3.6" height="3.7" fill="#80dc9f"/>
<rect x="249.2" y="971.1" width="3.6" height="3.7" fill="#80dc9f"/>
<rect x="278" y="971.1" width="3.6" height="3.7" fill="#80dc9f"/>
<rect x="285.2" y="971.1" width="3.6" height="3.7" fill="#80dc9f"/>
<rect x="152" y="993.1" width="3.6" height="2.8" fill="#80dc92"/>
<rect x="206" y="993.1" width="3.6" height="2.8" fill="#80dc92"/>
<rect x="278" y="993.1" width="3.6" height="2.8" fill="#80dc92"/>
<rect x="303.2" y="993.1" width="3.6" height="2.8" fill="#80dc92"/>
<rect x="170" y="996.2" width="3.6" height="3.7" fill="#80dc90"/>
<rect x="188" y="996.2" width="3.6" height="3.7" fill="#80dc90"/>
<rect x="224" y="996.2" width="3.6" height="3.7" fill="#80dc90"/>
<rect x="368" y="996.2" width="3.6" height="3.7" fill="#80dc90"/>
<rect x="458" y="834.1" width="3.6" height="3.7" fill="#5ea4dc"/>
<rect x="440" y="845.2" width="3.6" height="3.7" fill="#60a8dc"/>
<rect x="429.2" y="852.1" width="3.6" height="3.7" fill="#62aedd"/>
<rect x="429.2" y="867.1" width="3.6" height="2.8" fill="#67bae0"/>
<rect x="429.2" y="881.2" width="3.6" height="3.7" fill="#6dc7e1"/>
<rect x="501.2" y="881.2" width="3.6" height="3.7" fill="#6dc7e1"/>
<rect x="530" y="863" width="3.6" height="3.7" fill="#66b6df"/>
<rect x="530" y="877.3" width="3.6" height="3.7" fill="#6cc3e1"/>
<rect x="638" y="838.1" width="3.6" height="2.8" fill="#5ea6dc"/>
<rect x="627.2" y="841.2" width="3.6" height="3.7" fill="#5fa7dc"/>
<rect x="620" y="867.1" width="3.6" height="2.8" fill="#67bae0"/>
<rect x="609.2" y="870.3" width="3.6" height="3.7" fill="#68bce0"/>
<rect x="440" y="899.2" width="3.6" height="3.7" fill="#75d5df"/>
<rect x="458" y="899.2" width="3.6" height="3.7" fill="#75d5df"/>
<rect x="483.2" y="906.3" width="3.6" height="3.7" fill="#76d6d9"/>
<rect x="674" y="906.3" width="3.6" height="3.7" fill="#76d6d9"/>
<rect x="573.2" y="910.1" width="3.6" height="2.9" fill="#77d7d6"/>
<rect x="609.2" y="913.2" width="3.6" height="3.8" fill="#78d8d3"/>
<rect x="465.2" y="917.2" width="3.6" height="3.7" fill="#78d8d0"/>
<rect x="573.2" y="917.2" width="3.6" height="6.7" fill="#78d8d0"/>
<rect x="548" y="921" width="3.6" height="2.9" fill="#79d9cd"/>
<rect x="483.2" y="924.2" width="3.6" height="3.7" fill="#79d9ca"/>
<rect x="620" y="928.1" width="3.6" height="2.9" fill="#7adac6"/>
<rect x="537.2" y="931.1" width="3.6" height="7.7" fill="#7bdbc4"/>
<rect x="609.2" y="931.1" width="3.6" height="3.8" fill="#7bdbc4"/>
<rect x="638" y="931.1" width="3.6" height="3.8" fill="#7bdbc4"/>
<rect x="530" y="935.2" width="3.6" height="3.7" fill="#7bdbc0"/>
<rect x="591.2" y="935.2" width="3.6" height="3.7" fill="#7bdbc0"/>
<rect x="573.2" y="942.2" width="3.6" height="3.7" fill="#7cdcba"/>
<rect x="609.2" y="942.2" width="3.6" height="3.7" fill="#7cdcba"/>
<rect x="440" y="946.1" width="3.6" height="2.9" fill="#7ddcb6"/>
<rect x="483.2" y="946.1" width="3.6" height="2.9" fill="#7ddcb6"/>
<rect x="429.2" y="953.2" width="3.6" height="3.7" fill="#7edcae"/>
<rect x="465.2" y="953.2" width="3.6" height="3.7" fill="#7edcae"/>
<rect x="537.2" y="953.2" width="3.6" height="3.7" fill="#b4ee22"/>
<rect x="447.2" y="957.3" width="3.6" height="2.6" fill="#7fdcaa"/>
<rect x="440" y="964.1" width="3.6" height="2.9" fill="#80dca3"/>
<rect x="465.2" y="967.3" width="3.6" height="3.7" fill="#80dca1"/>
<rect x="674" y="967.3" width="3.6" height="3.7" fill="#80dca1"/>
<rect x="638" y="960.2" width="3.6" height="14.6" fill="#7fdca7"/>
<rect x="458" y="971.1" width="3.6" height="3.7" fill="#80dc9f"/>
<rect x="573.2" y="971.1" width="3.6" height="3.7" fill="#80dc9f"/>
<rect x="440" y="975.2" width="3.6" height="2.8" fill="#80dc9c"/>
<rect x="602" y="975.2" width="3.6" height="2.8" fill="#80dc9c"/>
<rect x="465.2" y="978.2" width="3.6" height="3.7" fill="#80dc9a"/>
<rect x="530" y="982.2" width="3.6" height="2.8" fill="#80dc98"/>
<rect x="609.2" y="982.2" width="3.6" height="2.8" fill="#80dc98"/>
<rect x="465.2" y="985.3" width="3.6" height="7.5" fill="#80dc96"/>
<rect x="476" y="985.3" width="3.6" height="3.7" fill="#80dc96"/>
<rect x="656" y="985.3" width="3.6" height="3.7" fill="#80dc96"/>
<rect x="674" y="985.3" width="3.6" height="3.7" fill="#80dc96"/>
<rect x="476" y="993.1" width="3.6" height="2.8" fill="#80dc92"/>
<rect x="620" y="993.1" width="3.6" height="2.8" fill="#80dc92"/>
<rect x="692" y="849.1" width="3.6" height="2.8" fill="#61abdd"/>
<rect x="843.2" y="849.1" width="3.6" height="2.8" fill="#61abdd"/>
<rect x="879.2" y="845.2" width="3.6" height="3.7" fill="#60a8dc"/>
<rect x="879.2" y="852.1" width="3.6" height="3.7" fill="#62aedd"/>
<rect x="789.2" y="856.1" width="3.6" height="2.8" fill="#64b1de"/>
<rect x="728" y="863" width="3.6" height="3.7" fill="#66b6df"/>
<rect x="843.2" y="863" width="3.6" height="3.7" fill="#66b6df"/>
<rect x="879.2" y="863" width="3.6" height="3.7" fill="#66b6df"/>
<rect x="692" y="867.1" width="3.6" height="2.8" fill="#67bae0"/>
<rect x="692" y="877.3" width="3.6" height="3.7" fill="#6cc3e1"/>
<rect x="728" y="877.3" width="3.6" height="3.7" fill="#6cc3e1"/>
<rect x="843.2" y="885" width="3.6" height="2.8" fill="#6fcae1"/>
<rect x="807.2" y="888.3" width="3.6" height="3.7" fill="#71cee1"/>
<rect x="879.2" y="888.3" width="3.6" height="3.7" fill="#71cee1"/>
<rect x="710" y="892.1" width="3.6" height="2.9" fill="#73d1e2"/>
<rect x="825.2" y="892.1" width="3.6" height="2.9" fill="#73d1e2"/>
<rect x="746" y="895.2" width="3.6" height="3.7" fill="#74d4e2"/>
<rect x="872" y="899.2" width="3.6" height="3.7" fill="#75d5df"/>
<rect x="789.2" y="906.3" width="3.6" height="3.7" fill="#76d6d9"/>
<rect x="872" y="910.1" width="3.6" height="2.9" fill="#77d7d6"/>
<rect x="879.2" y="910.1" width="3.6" height="2.9" fill="#77d7d6"/>
<rect x="897.2" y="910.1" width="3.6" height="6.9" fill="#77d7d6"/>
<rect x="728" y="913.2" width="3.6" height="3.8" fill="#78d8d3"/>
<rect x="789.2" y="913.2" width="3.6" height="3.8" fill="#7eec24"/>
<rect x="807.2" y="913.2" width="3.6" height="3.8" fill="#78d8d3"/>
<rect x="825.2" y="913.2" width="3.6" height="3.8" fill="#78d8d3"/>
<rect x="789.2" y="924.2" width="3.6" height="3.7" fill="#79d9ca"/>
<rect x="879.2" y="924.2" width="3.6" height="3.7" fill="#79d9ca"/>
<rect x="746" y="928.1" width="3.6" height="2.9" fill="#7adac6"/>
<rect x="764" y="931.1" width="3.6" height="3.8" fill="#7bdbc4"/>
<rect x="807.2" y="935.2" width="3.6" height="6.7" fill="#7bdbc0"/>
<rect x="746" y="942.2" width="3.6" height="3.7" fill="#7cdcba"/>
<rect x="764" y="942.2" width="3.6" height="3.7" fill="#7cdcba"/>
<rect x="872" y="946.1" width="3.6" height="2.9" fill="#7ddcb6"/>
<rect x="843.2" y="949.3" width="3.6" height="3.7" fill="#7ddcb2"/>
<rect x="692" y="949.3" width="3.6" height="7.5" fill="#7ddcb2"/>
<rect x="746" y="960.2" width="3.6" height="3.7" fill="#7fdca7"/>
<rect x="879.2" y="964.1" width="3.6" height="2.9" fill="#80dca3"/>
<rect x="789.2" y="982.2" width="3.6" height="2.8" fill="#80dc98"/>
<rect x="735.2" y="996.2" width="3.6" height="3.7" fill="#80dc90"/>
<rect x="195.2" y="1003.2" width="3.6" height="3.7" fill="#80dc8b"/>
<rect x="224" y="1003.2" width="3.6" height="3.7" fill="#80dc8b"/>
<rect x="393.2" y="1003.2" width="3.6" height="3.7" fill="#80dc8b"/>
<rect x="285.2" y="1007.2" width="3.6" height="3.7" fill="#80db88"/>
<rect x="188" y="1011.2" width="3.6" height="2.8" fill="#80db85"/>
<rect x="206" y="1014.1" width="3.6" height="3.7" fill="#80da83"/>
<rect x="296" y="1014.1" width="3.6" height="3.7" fill="#80da83"/>
<rect x="411.2" y="1018.1" width="3.6" height="2.8" fill="#80da80"/>
<rect x="249.2" y="1021.2" width="3.6" height="3.7" fill="#80d97d"/>
<rect x="386" y="1025.2" width="3.6" height="3.7" fill="#80d97a"/>
<rect x="411.2" y="1025.2" width="3.6" height="3.7" fill="#80d97a"/>
<rect x="278" y="1029.2" width="3.6" height="2.8" fill="#80d877"/>
<rect x="321.2" y="1036.1" width="3.6" height="2.8" fill="#80d872"/>
<rect x="224" y="1039.1" width="3.6" height="3.7" fill="#80d870"/>
<rect x="231.2" y="1039.1" width="3.6" height="3.7" fill="#80d870"/>
<rect x="285.2" y="1039.1" width="3.6" height="3.7" fill="#80d870"/>
<rect x="411.2" y="1043.2" width="3.6" height="3.7" fill="#7fd76d"/>
<rect x="267.2" y="1047.2" width="3.6" height="2.8" fill="#7fd76a"/>
<rect x="368" y="1050.1" width="3.6" height="3.7" fill="#7fd768"/>
<rect x="152" y="1054.1" width="3.6" height="2.8" fill="#7fd765"/>
<rect x="303.2" y="1054.1" width="3.6" height="2.8" fill="#7fd765"/>
<rect x="411.2" y="1057.1" width="3.6" height="3.7" fill="#7fd763"/>
<rect x="206" y="1065.2" width="3.6" height="2.8" fill="#7ed65d"/>
<rect x="152" y="1068.1" width="3.6" height="3.8" fill="#e8340c"/>
<rect x="411.2" y="1068.1" width="3.6" height="3.8" fill="#7ed65b"/>
<rect x="242" y="1072.1" width="3.6" height="2.8" fill="#7ed659"/>
<rect x="332" y="1072.1" width="3.6" height="2.8" fill="#7ed659"/>
<rect x="224" y="1075.1" width="3.6" height="3.7" fill="#7fd658"/>
<rect x="242" y="1079.1" width="3.6" height="3.7" fill="#7fd657"/>
<rect x="321.2" y="1079.1" width="3.6" height="3.7" fill="#7fd657"/>
<rect x="368" y="1079.1" width="3.6" height="3.7" fill="#e8340c"/>
<rect x="170" y="1083.2" width="3.6" height="6.7" fill="#80d655"/>
<rect x="332" y="1115.1" width="3.6" height="3.7" fill="#87d74b"/>
<rect x="296" y="1119.1" width="3.6" height="2.8" fill="#89d74b"/>
<rect x="170" y="1129.1" width="3.6" height="3.7" fill="#8ed84a"/>
<rect x="242" y="1129.1" width="3.6" height="3.7" fill="#8ed84a"/>
<rect x="267.2" y="1129.1" width="3.6" height="3.7" fill="#8ed84a"/>
<rect x="152" y="1133.1" width="3.6" height="3.7" fill="#90d84a"/>
<rect x="285.2" y="1147.1" width="3.6" height="3.9" fill="#97da48"/>
<rect x="674" y="1000.1" width="3.6" height="2.8" fill="#80dc8e"/>
<rect x="476" y="1003.2" width="3.6" height="7.7" fill="#80dc8b"/>
<rect x="555.2" y="1011.2" width="3.6" height="2.8" fill="#80db85"/>
<rect x="602" y="1011.2" width="3.6" height="2.8" fill="#80db85"/>
<rect x="609.2" y="1014.1" width="3.6" height="3.7" fill="#80da83"/>
<rect x="537.2" y="1018.1" width="3.6" height="6.7" fill="#80da80"/>
<rect x="465.2" y="1025.2" width="3.6" height="3.7" fill="#80d97a"/>
<rect x="440" y="1029.2" width="3.6" height="2.8" fill="#80d877"/>
<rect x="584" y="1029.2" width="3.6" height="2.8" fill="#80d877"/>
<rect x="674" y="1029.2" width="3.6" height="2.8" fill="#80d877"/>
<rect x="656" y="1032.1" width="3.6" height="3.7" fill="#80d875"/>
<rect x="555.2" y="1036.1" width="3.6" height="2.8" fill="#80d872"/>
<rect x="638" y="1039.1" width="3.6" height="3.7" fill="#80d870"/>
<rect x="447.2" y="1050.1" width="3.6" height="3.7" fill="#7fd768"/>
<rect x="627.2" y="1050.1" width="3.6" height="3.7" fill="#7fd768"/>
<rect x="429.2" y="1054.1" width="3.6" height="2.8" fill="#7fd765"/>
<rect x="483.2" y="1057.1" width="3.6" height="3.7" fill="#7fd763"/>
<rect x="591.2" y="1057.1" width="3.6" height="3.7" fill="#7fd763"/>
<rect x="620" y="1065.2" width="3.6" height="2.8" fill="#7ed65d"/>
<rect x="422" y="1068.1" width="3.6" height="3.8" fill="#7ed65b"/>
<rect x="584" y="1068.1" width="3.6" height="3.8" fill="#7ed65b"/>
<rect x="591.2" y="1068.1" width="3.6" height="3.8" fill="#e8340c"/>
<rect x="440" y="1072.1" width="3.6" height="2.8" fill="#7ed659"/>
<rect x="476" y="1072.1" width="3.6" height="2.8" fill="#7ed659"/>
<rect x="465.2" y="1075.1" width="3.6" height="3.7" fill="#7fd658"/>
<rect x="537.2" y="1075.1" width="3.6" height="3.7" fill="#7fd658"/>
<rect x="429.2" y="1079.1" width="3.6" height="3.7" fill="#7fd657"/>
<rect x="609.2" y="1083.2" width="3.6" height="2.8" fill="#80d655"/>
<rect x="422" y="1101.1" width="3.6" height="2.8" fill="#83d64f"/>
<rect x="674" y="1101.1" width="3.6" height="2.8" fill="#83d64f"/>
<rect x="638" y="1108.2" width="3.6" height="2.8" fill="#84d64d"/>
<rect x="609.2" y="1111.3" width="3.6" height="3.7" fill="#85d64c"/>
<rect x="476" y="1115.1" width="3.6" height="3.7" fill="#87d74b"/>
<rect x="530" y="1115.1" width="3.6" height="3.7" fill="#87d74b"/>
<rect x="591.2" y="1115.1" width="3.6" height="3.7" fill="#87d74b"/>
<rect x="483.2" y="1119.1" width="3.6" height="2.8" fill="#89d74b"/>
<rect x="620" y="1119.1" width="3.6" height="2.8" fill="#89d74b"/>
<rect x="530" y="1126.2" width="3.6" height="2.8" fill="#8cd84a"/>
<rect x="548" y="1144.2" width="3.6" height="2.8" fill="#95d949"/>
<rect x="602" y="1147.1" width="3.6" height="3.9" fill="#97da48"/>
<rect x="789.2" y="1000.1" width="3.6" height="2.8" fill="#80dc8e"/>
<rect x="710" y="1003.2" width="3.6" height="3.7" fill="#80dc8b"/>
<rect x="807.2" y="1003.2" width="3.6" height="3.7" fill="#80dc8b"/>
<rect x="843.2" y="1003.2" width="3.6" height="3.7" fill="#80dc8b"/>
<rect x="764" y="1007.2" width="3.6" height="3.7" fill="#80db88"/>
<rect x="710" y="1011.2" width="3.6" height="2.8" fill="#80db85"/>
<rect x="807.2" y="1018.1" width="3.6" height="2.8" fill="#80da80"/>
<rect x="825.2" y="1025.2" width="3.6" height="3.7" fill="#80d97a"/>
<rect x="710" y="1029.2" width="3.6" height="2.8" fill="#80d877"/>
<rect x="764" y="1032.1" width="3.6" height="3.7" fill="#80d875"/>
<rect x="825.2" y="1043.2" width="3.6" height="3.7" fill="#7fd76d"/>
<rect x="807.2" y="1047.2" width="3.6" height="2.8" fill="#7fd76a"/>
<rect x="710" y="1050.1" width="3.6" height="3.7" fill="#7fd768"/>
<rect x="692" y="1054.1" width="3.6" height="2.8" fill="#7fd765"/>
<rect x="710" y="1061.2" width="3.6" height="10.7" fill="#7ed660"/>
<rect x="764" y="1065.2" width="3.6" height="2.8" fill="#7ed65d"/>
<rect x="728" y="1068.1" width="3.6" height="3.8" fill="#7ed65b"/>
<rect x="836" y="1083.2" width="3.6" height="2.8" fill="#80d655"/>
<rect x="825.2" y="1086.2" width="3.6" height="6.6" fill="#80d654"/>
<rect x="728" y="1101.1" width="3.6" height="2.8" fill="#83d64f"/>
<rect x="789.2" y="1104.2" width="3.6" height="3.7" fill="#83d64e"/>
<rect x="897.2" y="1122.2" width="3.6" height="3.7" fill="#8ad74b"/>
<rect x="836" y="1137.1" width="3.6" height="2.8" fill="#92d949"/>
<rect x="807.2" y="1140.2" width="3.6" height="3.7" fill="#93d949"/>
<rect x="717.2" y="1144.2" width="3.6" height="2.8" fill="#95d949"/>
<rect x="151.5" y="449.5" width="1296" height="702" fill="none" stroke="#d2d2d2" stroke-width="1"/>
<g font-family="'Liberation Sans', sans-serif">
<text x="148.5" y="229.8" text-anchor="end" fill="#8a8a8a" font-size="9.2">8</text>
<text x="148.5" y="319.8" text-anchor="end" fill="#8a8a8a" font-size="9.2">0</text>
<text x="148.5" y="337.8" text-anchor="end" fill="#8a8a8a" font-size="9.2">18772</text>
<text x="148.5" y="427.8" text-anchor="end" fill="#8a8a8a" font-size="9.2">0</text>
<text x="178" y="229.8" text-anchor="middle" fill="#8a8a8a" font-size="9.2">00</text>
<text x="232" y="229.8" text-anchor="middle" fill="#8a8a8a" font-size="9.2">01</text>
<text x="286" y="229.8" text-anchor="middle" fill="#8a8a8a" font-size="9.2">02</text>
<text x="340" y="229.8" text-anchor="middle" fill="#8a8a8a" font-size="9.2">03</text>
<text x="394" y="229.8" text-anchor="middle" fill="#8a8a8a" font-size="9.2">04</text>
<text x="448" y="229.8" text-anchor="middle" fill="#8a8a8a" font-size="9.2">05</text>
<text x="502" y="229.8" text-anchor="middle" fill="#8a8a8a" font-size="9.2">06</text>
<text x="556" y="229.8" text-anchor="middle" fill="#8a8a8a" font-size="9.2">07</text>
<text x="610" y="229.8" text-anchor="middle" fill="#8a8a8a" font-size="9.2">08</text>
<text x="664" y="229.8" text-anchor="middle" fill="#8a8a8a" font-size="9.2">09</text>
<text x="718" y="229.8" text-anchor="middle" fill="#8a8a8a" font-size="9.2">10</text>
<text x="772" y="229.8" text-anchor="middle" fill="#8a8a8a" font-size="9.2">11</text>
<text x="826" y="229.8" text-anchor="middle" fill="#8a8a8a" font-size="9.2">12</text>
<text x="880" y="229.8" text-anchor="middle" fill="#8a8a8a" font-size="9.2">13</text>
<text x="934" y="229.8" text-anchor="middle" fill="#8a8a8a" font-size="9.2">14</text>
<text x="988" y="229.8" text-anchor="middle" fill="#8a8a8a" font-size="9.2">15</text>
<text x="1042" y="229.8" text-anchor="middle" fill="#8a8a8a" font-size="9.2">16</text>
<text x="1096" y="229.8" text-anchor="middle" fill="#8a8a8a" font-size="9.2">17</text>
<text x="1150" y="229.8" text-anchor="middle" fill="#8a8a8a" font-size="9.2">18</text>
<text x="1204" y="229.8" text-anchor="middle" fill="#8a8a8a" font-size="9.2">19</text>
<text x="1258" y="229.8" text-anchor="middle" fill="#8a8a8a" font-size="9.2">20</text>
<text x="1312" y="229.8" text-anchor="middle" fill="#8a8a8a" font-size="9.2">21</text>
<text x="1366" y="229.8" text-anchor="middle" fill="#8a8a8a" font-size="9.2">22</text>
<text x="1420" y="229.8" text-anchor="middle" fill="#8a8a8a" font-size="9.2">23</text>
<text x="148.5" y="460.8" text-anchor="end" fill="#8a8a8a" font-size="9.2">10</text>
<text x="148.5" y="496.8" text-anchor="end" fill="#8a8a8a" font-size="9.2">100</text>
<text x="148.5" y="517.8" text-anchor="end" fill="#c4c4c4" font-size="9.2">200</text>
<text x="148.5" y="546.8" text-anchor="end" fill="#c4c4c4" font-size="9.2">400</text>
<text x="148.5" y="568.8" text-anchor="end" fill="#c4c4c4" font-size="9.2">600</text>
<text x="148.5" y="589.8" text-anchor="end" fill="#c4c4c4" font-size="9.2">800</text>
<text x="148.5" y="604.8" text-anchor="end" fill="#8a8a8a" font-size="9.2">1K</text>
<text x="148.5" y="672.8" text-anchor="end" fill="#c4c4c4" font-size="9.2">2K</text>
<text x="148.5" y="723.8" text-anchor="end" fill="#c4c4c4" font-size="9.2">3K</text>
<text x="148.5" y="766.8" text-anchor="end" fill="#c4c4c4" font-size="9.2">4K</text>
<text x="148.5" y="805.8" text-anchor="end" fill="#c4c4c4" font-size="9.2">5K</text>
<text x="148.5" y="838.8" text-anchor="end" fill="#c4c4c4" font-size="9.2">6K</text>
<text x="148.5" y="870.8" text-anchor="end" fill="#c4c4c4" font-size="9.2">7K</text>
<text x="148.5" y="899.8" text-anchor="end" fill="#c4c4c4" font-size="9.2">8K</text>
<text x="148.5" y="928.8" text-anchor="end" fill="#c4c4c4" font-size="9.2">9K</text>
<text x="148.5" y="953.8" text-anchor="end" fill="#8a8a8a" font-size="9.2">10K</text>
</g>
</svg>
</div>
</body></html>
